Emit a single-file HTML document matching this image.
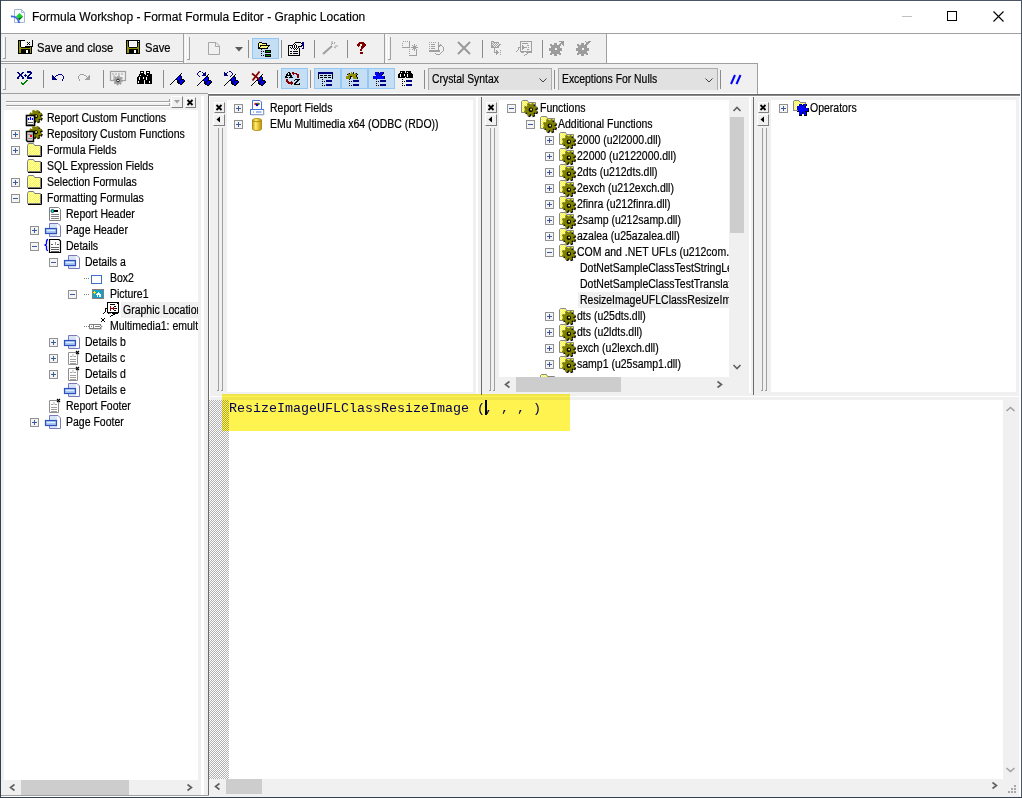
<!DOCTYPE html>
<html><head><meta charset="utf-8">
<style>
*{margin:0;padding:0;box-sizing:border-box}
html,body{width:1022px;height:798px;overflow:hidden;background:#fff;font-family:"Liberation Sans",sans-serif;color:#000;position:relative}
.a{position:absolute}
.t{position:absolute;white-space:nowrap;font-size:11px;line-height:14px}
.tr{position:absolute;white-space:nowrap;font-size:12px;line-height:14px;transform:scaleX(0.875);transform-origin:0 0;-webkit-text-stroke:0.2px #000}
svg{position:absolute;overflow:visible}
</style></head><body>
<div class="a" style="left:0px;top:0px;width:1022px;height:1px;background:#4a5666;"></div>
<div class="a" style="left:0px;top:0px;width:1px;height:798px;background:#34404e;"></div>
<div class="a" style="left:1021px;top:0px;width:1px;height:798px;background:#4a5666;"></div>
<div class="a" style="left:0px;top:797px;width:1022px;height:1px;background:#34404e;"></div>
<svg style="left:10px;top:8px;" width="16" height="16" viewBox="0 0 16 16"><path d="M4.5 1.5H11.5L14.5 4.5V14.5H4.5Z" fill="#fafcff" stroke="#a4b8d4"/><path d="M11.5 1.5V4.5H14.5" fill="none" stroke="#a4b8d4"/><path d="M9.5 5L13 8.5L9.5 12L6 8.5Z" fill="#20d030"/><path d="M13 8.5L9.5 12L8 10.5Z" fill="#006000"/><path d="M1 8.5Q5 8 7.5 11Q9 13 9 15" stroke="#3a68e0" stroke-width="1.8" fill="none"/></svg>
<div class="t" style="left:32px;top:10px;font-size:12px;letter-spacing:0px;color:#000;line-height:15px;-webkit-text-stroke:0.15px #000">Formula Workshop - Format Formula Editor - Graphic Location</div>
<div class="a" style="left:1px;top:33px;width:1020px;height:1px;background:#a0a0a0;"></div>
<div class="a" style="left:902px;top:16px;width:10px;height:1px;background:#c0c0c0;"></div>
<div class="a" style="left:947px;top:11px;width:10px;height:10px;border:1px solid #000"></div>
<svg style="left:993px;top:11px;" width="11" height="11" viewBox="0 0 11 11"><path d="M0.5 0.5L10.5 10.5M10.5 0.5L0.5 10.5" stroke="#000" stroke-width="1.1"/></svg>
<div class="a" style="left:1px;top:34px;width:182px;height:27px;background:#f0f0f0;"></div>
<div class="a" style="left:1px;top:61px;width:182px;height:1px;background:#a0a0a0;"></div>
<div class="a" style="left:183px;top:34px;width:1px;height:30px;background:#a0a0a0;"></div>
<div class="a" style="left:1px;top:63px;width:757px;height:1px;background:#a0a0a0;"></div>
<div class="a" style="left:3px;top:37px;width:1px;height:21px;background:#fff;"></div>
<div class="a" style="left:5px;top:37px;width:1px;height:22px;background:#a0a0a0;"></div>
<div class="a" style="left:3px;top:58px;width:3px;height:1px;background:#a0a0a0;"></div>
<div class="a" style="left:184px;top:34px;width:200px;height:29px;background:#f0f0f0;"></div>
<div class="a" style="left:185px;top:34px;width:1px;height:29px;background:#fff;"></div>
<div class="a" style="left:384px;top:34px;width:1px;height:30px;background:#a0a0a0;"></div>
<div class="a" style="left:187px;top:37px;width:1px;height:22px;background:#fff;"></div>
<div class="a" style="left:189px;top:37px;width:1px;height:23px;background:#a0a0a0;"></div>
<div class="a" style="left:187px;top:59px;width:3px;height:1px;background:#a0a0a0;"></div>
<div class="a" style="left:385px;top:34px;width:221px;height:29px;background:#f0f0f0;"></div>
<div class="a" style="left:386px;top:34px;width:1px;height:29px;background:#fff;"></div>
<div class="a" style="left:606px;top:34px;width:1px;height:30px;background:#a0a0a0;"></div>
<div class="a" style="left:388px;top:37px;width:1px;height:22px;background:#fff;"></div>
<div class="a" style="left:390px;top:37px;width:1px;height:23px;background:#a0a0a0;"></div>
<div class="a" style="left:388px;top:59px;width:3px;height:1px;background:#a0a0a0;"></div>
<svg style="left:16px;top:38px" width="17" height="16" shape-rendering="crispEdges"><rect x="2" y="2" width="7" height="1" fill="#000"/><rect x="16" y="2" width="1" height="1" fill="#000"/><rect x="2" y="3" width="1" height="1" fill="#000"/><rect x="3" y="3" width="1" height="1" fill="#909000"/><rect x="4" y="3" width="1" height="1" fill="#000"/><rect x="5" y="3" width="4" height="1" fill="#fff"/><rect x="16" y="3" width="1" height="1" fill="#000"/><rect x="2" y="4" width="1" height="1" fill="#000"/><rect x="3" y="4" width="1" height="1" fill="#909000"/><rect x="4" y="4" width="1" height="1" fill="#000"/><rect x="5" y="4" width="4" height="1" fill="#fff"/><rect x="11" y="4" width="1" height="1" fill="#000"/><rect x="13" y="4" width="1" height="1" fill="#000"/><rect x="16" y="4" width="1" height="1" fill="#000"/><rect x="2" y="5" width="1" height="1" fill="#000"/><rect x="3" y="5" width="1" height="1" fill="#909000"/><rect x="4" y="5" width="1" height="1" fill="#000"/><rect x="5" y="5" width="4" height="1" fill="#fff"/><rect x="12" y="5" width="1" height="1" fill="#000"/><rect x="16" y="5" width="1" height="1" fill="#000"/><rect x="2" y="6" width="1" height="1" fill="#000"/><rect x="3" y="6" width="1" height="1" fill="#909000"/><rect x="4" y="6" width="1" height="1" fill="#000"/><rect x="5" y="6" width="4" height="1" fill="#fff"/><rect x="11" y="6" width="1" height="1" fill="#000"/><rect x="13" y="6" width="1" height="1" fill="#000"/><rect x="16" y="6" width="1" height="1" fill="#000"/><rect x="2" y="7" width="1" height="1" fill="#000"/><rect x="3" y="7" width="1" height="1" fill="#909000"/><rect x="4" y="7" width="1" height="1" fill="#000"/><rect x="5" y="7" width="4" height="1" fill="#fff"/><rect x="16" y="7" width="1" height="1" fill="#000"/><rect x="2" y="8" width="1" height="1" fill="#000"/><rect x="3" y="8" width="1" height="1" fill="#909000"/><rect x="4" y="8" width="1" height="1" fill="#000"/><rect x="5" y="8" width="4" height="1" fill="#fff"/><rect x="9" y="8" width="8" height="1" fill="#000"/><rect x="2" y="9" width="1" height="1" fill="#000"/><rect x="3" y="9" width="2" height="1" fill="#909000"/><rect x="5" y="9" width="9" height="1" fill="#000"/><rect x="14" y="9" width="1" height="1" fill="#909000"/><rect x="15" y="9" width="1" height="1" fill="#000"/><rect x="2" y="10" width="1" height="1" fill="#000"/><rect x="3" y="10" width="12" height="1" fill="#909000"/><rect x="15" y="10" width="1" height="1" fill="#000"/><rect x="2" y="11" width="1" height="1" fill="#000"/><rect x="3" y="11" width="2" height="1" fill="#909000"/><rect x="5" y="11" width="9" height="1" fill="#000"/><rect x="14" y="11" width="1" height="1" fill="#909000"/><rect x="15" y="11" width="1" height="1" fill="#000"/><rect x="2" y="12" width="1" height="1" fill="#000"/><rect x="3" y="12" width="2" height="1" fill="#909000"/><rect x="5" y="12" width="5" height="1" fill="#000"/><rect x="10" y="12" width="2" height="1" fill="#fff"/><rect x="12" y="12" width="2" height="1" fill="#000"/><rect x="14" y="12" width="1" height="1" fill="#909000"/><rect x="15" y="12" width="1" height="1" fill="#000"/><rect x="2" y="13" width="1" height="1" fill="#000"/><rect x="3" y="13" width="2" height="1" fill="#909000"/><rect x="5" y="13" width="5" height="1" fill="#000"/><rect x="10" y="13" width="2" height="1" fill="#fff"/><rect x="12" y="13" width="2" height="1" fill="#000"/><rect x="14" y="13" width="1" height="1" fill="#909000"/><rect x="15" y="13" width="1" height="1" fill="#000"/><rect x="2" y="14" width="1" height="1" fill="#000"/><rect x="3" y="14" width="2" height="1" fill="#909000"/><rect x="5" y="14" width="5" height="1" fill="#000"/><rect x="10" y="14" width="2" height="1" fill="#fff"/><rect x="12" y="14" width="2" height="1" fill="#000"/><rect x="14" y="14" width="1" height="1" fill="#909000"/><rect x="15" y="14" width="1" height="1" fill="#000"/><rect x="2" y="15" width="14" height="1" fill="#000"/></svg>
<div class="tr" style="left:37px;top:41px;transform:scaleX(0.93)">Save and close</div>
<svg style="left:124px;top:38px" width="16" height="16" shape-rendering="crispEdges"><rect x="2" y="2" width="14" height="1" fill="#000"/><rect x="2" y="3" width="1" height="1" fill="#000"/><rect x="3" y="3" width="1" height="1" fill="#909000"/><rect x="4" y="3" width="1" height="1" fill="#000"/><rect x="5" y="3" width="8" height="1" fill="#fff"/><rect x="13" y="3" width="1" height="1" fill="#000"/><rect x="14" y="3" width="1" height="1" fill="#fff"/><rect x="15" y="3" width="1" height="1" fill="#000"/><rect x="2" y="4" width="1" height="1" fill="#000"/><rect x="3" y="4" width="1" height="1" fill="#909000"/><rect x="4" y="4" width="1" height="1" fill="#000"/><rect x="5" y="4" width="1" height="1" fill="#fff"/><rect x="6" y="4" width="6" height="1" fill="#f0f0f0"/><rect x="12" y="4" width="1" height="1" fill="#fff"/><rect x="13" y="4" width="3" height="1" fill="#000"/><rect x="2" y="5" width="1" height="1" fill="#000"/><rect x="3" y="5" width="1" height="1" fill="#909000"/><rect x="4" y="5" width="1" height="1" fill="#000"/><rect x="5" y="5" width="1" height="1" fill="#fff"/><rect x="6" y="5" width="6" height="1" fill="#f0f0f0"/><rect x="12" y="5" width="1" height="1" fill="#fff"/><rect x="13" y="5" width="1" height="1" fill="#000"/><rect x="14" y="5" width="1" height="1" fill="#909000"/><rect x="15" y="5" width="1" height="1" fill="#000"/><rect x="2" y="6" width="1" height="1" fill="#000"/><rect x="3" y="6" width="1" height="1" fill="#909000"/><rect x="4" y="6" width="1" height="1" fill="#000"/><rect x="5" y="6" width="1" height="1" fill="#fff"/><rect x="6" y="6" width="6" height="1" fill="#f0f0f0"/><rect x="12" y="6" width="1" height="1" fill="#fff"/><rect x="13" y="6" width="1" height="1" fill="#000"/><rect x="14" y="6" width="1" height="1" fill="#909000"/><rect x="15" y="6" width="1" height="1" fill="#000"/><rect x="2" y="7" width="1" height="1" fill="#000"/><rect x="3" y="7" width="1" height="1" fill="#909000"/><rect x="4" y="7" width="1" height="1" fill="#000"/><rect x="5" y="7" width="1" height="1" fill="#fff"/><rect x="6" y="7" width="6" height="1" fill="#f0f0f0"/><rect x="12" y="7" width="1" height="1" fill="#fff"/><rect x="13" y="7" width="1" height="1" fill="#000"/><rect x="14" y="7" width="1" height="1" fill="#909000"/><rect x="15" y="7" width="1" height="1" fill="#000"/><rect x="2" y="8" width="1" height="1" fill="#000"/><rect x="3" y="8" width="1" height="1" fill="#909000"/><rect x="4" y="8" width="1" height="1" fill="#000"/><rect x="5" y="8" width="8" height="1" fill="#fff"/><rect x="13" y="8" width="1" height="1" fill="#000"/><rect x="14" y="8" width="1" height="1" fill="#909000"/><rect x="15" y="8" width="1" height="1" fill="#000"/><rect x="2" y="9" width="1" height="1" fill="#000"/><rect x="3" y="9" width="2" height="1" fill="#909000"/><rect x="5" y="9" width="8" height="1" fill="#000"/><rect x="13" y="9" width="2" height="1" fill="#909000"/><rect x="15" y="9" width="1" height="1" fill="#000"/><rect x="2" y="10" width="1" height="1" fill="#000"/><rect x="3" y="10" width="12" height="1" fill="#909000"/><rect x="15" y="10" width="1" height="1" fill="#000"/><rect x="2" y="11" width="1" height="1" fill="#000"/><rect x="3" y="11" width="2" height="1" fill="#909000"/><rect x="5" y="11" width="9" height="1" fill="#000"/><rect x="14" y="11" width="1" height="1" fill="#909000"/><rect x="15" y="11" width="1" height="1" fill="#000"/><rect x="2" y="12" width="1" height="1" fill="#000"/><rect x="3" y="12" width="2" height="1" fill="#909000"/><rect x="5" y="12" width="5" height="1" fill="#000"/><rect x="10" y="12" width="2" height="1" fill="#fff"/><rect x="12" y="12" width="2" height="1" fill="#000"/><rect x="14" y="12" width="1" height="1" fill="#909000"/><rect x="15" y="12" width="1" height="1" fill="#000"/><rect x="2" y="13" width="1" height="1" fill="#000"/><rect x="3" y="13" width="2" height="1" fill="#909000"/><rect x="5" y="13" width="5" height="1" fill="#000"/><rect x="10" y="13" width="2" height="1" fill="#fff"/><rect x="12" y="13" width="2" height="1" fill="#000"/><rect x="14" y="13" width="1" height="1" fill="#909000"/><rect x="15" y="13" width="1" height="1" fill="#000"/><rect x="2" y="14" width="1" height="1" fill="#000"/><rect x="3" y="14" width="2" height="1" fill="#909000"/><rect x="5" y="14" width="5" height="1" fill="#000"/><rect x="10" y="14" width="2" height="1" fill="#fff"/><rect x="12" y="14" width="2" height="1" fill="#000"/><rect x="14" y="14" width="1" height="1" fill="#909000"/><rect x="15" y="14" width="1" height="1" fill="#000"/><rect x="2" y="15" width="14" height="1" fill="#000"/></svg>
<div class="tr" style="left:145px;top:41px;transform:scaleX(0.93)">Save</div>
<svg style="left:208px;top:42px;" width="12" height="13" viewBox="0 0 12 13"><path d="M0.5 0.5H8L11.5 4V12.5H0.5Z" fill="none" stroke="#a6a6a6"/><path d="M7.5 0.5V4.5H11.5" fill="none" stroke="#a6a6a6"/></svg>
<svg style="left:235px;top:47px;" width="8" height="5" viewBox="0 0 8 5"><path d="M0 0H8L4 4.5Z" fill="#5a5a5a"/></svg>
<div class="a" style="left:248px;top:40px;width:1px;height:18px;background:#8c8c8c;"></div>
<div class="a" style="left:252px;top:38px;width:27px;height:21px;background:#c6def3;border:1px solid #92c8f6"></div>
<svg style="left:256px;top:40px" width="19" height="17" shape-rendering="crispEdges"><rect x="3" y="2" width="3" height="1" fill="#000"/><rect x="2" y="3" width="1" height="1" fill="#000"/><rect x="3" y="3" width="1" height="1" fill="#ffff00"/><rect x="4" y="3" width="1" height="1" fill="#fff"/><rect x="5" y="3" width="1" height="1" fill="#ffff00"/><rect x="6" y="3" width="5" height="1" fill="#000"/><rect x="2" y="4" width="1" height="1" fill="#000"/><rect x="3" y="4" width="1" height="1" fill="#fff"/><rect x="4" y="4" width="1" height="1" fill="#ffff00"/><rect x="5" y="4" width="1" height="1" fill="#fff"/><rect x="6" y="4" width="1" height="1" fill="#ffff00"/><rect x="7" y="4" width="1" height="1" fill="#fff"/><rect x="8" y="4" width="1" height="1" fill="#ffff00"/><rect x="9" y="4" width="1" height="1" fill="#fff"/><rect x="10" y="4" width="1" height="1" fill="#000"/><rect x="2" y="5" width="1" height="1" fill="#000"/><rect x="3" y="5" width="1" height="1" fill="#ffff00"/><rect x="4" y="5" width="10" height="1" fill="#000"/><rect x="2" y="6" width="1" height="1" fill="#000"/><rect x="3" y="6" width="1" height="1" fill="#fff"/><rect x="4" y="6" width="1" height="1" fill="#000"/><rect x="5" y="6" width="1" height="1" fill="#ffff00"/><rect x="6" y="6" width="1" height="1" fill="#fff"/><rect x="7" y="6" width="1" height="1" fill="#ffff00"/><rect x="8" y="6" width="1" height="1" fill="#fff"/><rect x="9" y="6" width="1" height="1" fill="#ffff00"/><rect x="10" y="6" width="1" height="1" fill="#fff"/><rect x="11" y="6" width="1" height="1" fill="#ffff00"/><rect x="12" y="6" width="1" height="1" fill="#000"/><rect x="2" y="7" width="2" height="1" fill="#000"/><rect x="4" y="7" width="1" height="1" fill="#ffff00"/><rect x="5" y="7" width="1" height="1" fill="#fff"/><rect x="6" y="7" width="1" height="1" fill="#ffff00"/><rect x="7" y="7" width="1" height="1" fill="#fff"/><rect x="8" y="7" width="1" height="1" fill="#ffff00"/><rect x="9" y="7" width="1" height="1" fill="#fff"/><rect x="10" y="7" width="1" height="1" fill="#ffff00"/><rect x="11" y="7" width="1" height="1" fill="#000"/><rect x="2" y="8" width="10" height="1" fill="#000"/><rect x="5" y="9" width="1" height="1" fill="#000"/><rect x="9" y="10" width="6" height="1" fill="#000"/><rect x="5" y="11" width="1" height="1" fill="#000"/><rect x="7" y="11" width="1" height="1" fill="#000"/><rect x="9" y="11" width="1" height="1" fill="#000"/><rect x="10" y="11" width="4" height="1" fill="#008000"/><rect x="14" y="11" width="1" height="1" fill="#000"/><rect x="9" y="12" width="6" height="1" fill="#000"/><rect x="5" y="13" width="1" height="1" fill="#000"/><rect x="9" y="14" width="6" height="1" fill="#000"/><rect x="5" y="15" width="1" height="1" fill="#000"/><rect x="7" y="15" width="1" height="1" fill="#000"/><rect x="9" y="15" width="1" height="1" fill="#000"/><rect x="10" y="15" width="4" height="1" fill="#008000"/><rect x="14" y="15" width="1" height="1" fill="#000"/><rect x="9" y="16" width="6" height="1" fill="#000"/></svg>
<div class="a" style="left:281px;top:40px;width:1px;height:18px;background:#8c8c8c;"></div>
<svg style="left:286px;top:40px" width="18" height="16" shape-rendering="crispEdges"><rect x="9" y="2" width="6" height="1" fill="#000"/><rect x="16" y="2" width="2" height="1" fill="#000080"/><rect x="8" y="3" width="1" height="1" fill="#000"/><rect x="9" y="3" width="1" height="1" fill="#fff"/><rect x="15" y="3" width="1" height="1" fill="#000"/><rect x="16" y="3" width="2" height="1" fill="#000080"/><rect x="7" y="4" width="1" height="1" fill="#000"/><rect x="8" y="4" width="1" height="1" fill="#fff"/><rect x="9" y="4" width="1" height="1" fill="#000"/><rect x="16" y="4" width="2" height="1" fill="#000080"/><rect x="2" y="5" width="5" height="1" fill="#000"/><rect x="7" y="5" width="1" height="1" fill="#fff"/><rect x="8" y="5" width="1" height="1" fill="#000"/><rect x="9" y="5" width="1" height="1" fill="#fff"/><rect x="10" y="5" width="1" height="1" fill="#000"/><rect x="15" y="5" width="1" height="1" fill="#000"/><rect x="16" y="5" width="2" height="1" fill="#000080"/><rect x="2" y="6" width="1" height="1" fill="#000"/><rect x="6" y="6" width="1" height="1" fill="#000"/><rect x="7" y="6" width="1" height="1" fill="#fff"/><rect x="8" y="6" width="1" height="1" fill="#000"/><rect x="9" y="6" width="1" height="1" fill="#fff"/><rect x="10" y="6" width="1" height="1" fill="#000"/><rect x="11" y="6" width="1" height="1" fill="#fff"/><rect x="12" y="6" width="4" height="1" fill="#000"/><rect x="17" y="6" width="1" height="1" fill="#000080"/><rect x="2" y="7" width="1" height="1" fill="#000"/><rect x="4" y="7" width="1" height="1" fill="#000"/><rect x="5" y="7" width="1" height="1" fill="#fff"/><rect x="6" y="7" width="1" height="1" fill="#000"/><rect x="7" y="7" width="1" height="1" fill="#fff"/><rect x="8" y="7" width="1" height="1" fill="#000"/><rect x="9" y="7" width="1" height="1" fill="#fff"/><rect x="10" y="7" width="1" height="1" fill="#000"/><rect x="11" y="7" width="1" height="1" fill="#fff"/><rect x="12" y="7" width="1" height="1" fill="#000"/><rect x="17" y="7" width="1" height="1" fill="#000080"/><rect x="2" y="8" width="1" height="1" fill="#000"/><rect x="5" y="8" width="1" height="1" fill="#000"/><rect x="7" y="8" width="1" height="1" fill="#000"/><rect x="8" y="8" width="1" height="1" fill="#fff"/><rect x="9" y="8" width="1" height="1" fill="#000"/><rect x="10" y="8" width="1" height="1" fill="#fff"/><rect x="11" y="8" width="1" height="1" fill="#000"/><rect x="13" y="8" width="1" height="1" fill="#000"/><rect x="16" y="8" width="2" height="1" fill="#000080"/><rect x="2" y="9" width="1" height="1" fill="#000"/><rect x="8" y="9" width="1" height="1" fill="#000"/><rect x="9" y="9" width="1" height="1" fill="#fff"/><rect x="10" y="9" width="1" height="1" fill="#000"/><rect x="13" y="9" width="1" height="1" fill="#000"/><rect x="2" y="10" width="1" height="1" fill="#000"/><rect x="13" y="10" width="1" height="1" fill="#000"/><rect x="2" y="11" width="1" height="1" fill="#000"/><rect x="4" y="11" width="2" height="1" fill="#000"/><rect x="7" y="11" width="5" height="1" fill="#000"/><rect x="13" y="11" width="1" height="1" fill="#000"/><rect x="2" y="12" width="1" height="1" fill="#000"/><rect x="13" y="12" width="1" height="1" fill="#000"/><rect x="2" y="13" width="1" height="1" fill="#000"/><rect x="4" y="13" width="2" height="1" fill="#000"/><rect x="7" y="13" width="5" height="1" fill="#000"/><rect x="13" y="13" width="1" height="1" fill="#000"/><rect x="2" y="14" width="1" height="1" fill="#000"/><rect x="13" y="14" width="1" height="1" fill="#000"/><rect x="2" y="15" width="12" height="1" fill="#000"/></svg>
<div class="a" style="left:314px;top:40px;width:1px;height:18px;background:#8c8c8c;"></div>
<svg style="left:322px;top:41px;" width="16" height="14" viewBox="0 0 16 14"><path d="M1 13L10 5" stroke="#a0a0a0" stroke-width="2.2"/><path d="M10 0V3M13 5H16M11 2L9 4M13 1L12 3M14 7L12 6" stroke="#a0a0a0" stroke-width="1"/></svg>
<div class="a" style="left:347px;top:40px;width:1px;height:18px;background:#8c8c8c;"></div>
<svg style="left:352px;top:40px" width="14" height="14" shape-rendering="crispEdges"><rect x="7" y="2" width="5" height="1" fill="#800000"/><rect x="6" y="3" width="7" height="1" fill="#800000"/><rect x="5" y="4" width="3" height="1" fill="#800000"/><rect x="10" y="4" width="4" height="1" fill="#800000"/><rect x="5" y="5" width="3" height="1" fill="#800000"/><rect x="10" y="5" width="4" height="1" fill="#800000"/><rect x="6" y="6" width="1" height="1" fill="#800000"/><rect x="9" y="6" width="4" height="1" fill="#800000"/><rect x="9" y="7" width="3" height="1" fill="#800000"/><rect x="9" y="8" width="2" height="1" fill="#800000"/><rect x="8" y="9" width="2" height="1" fill="#800000"/><rect x="8" y="10" width="2" height="1" fill="#800000"/><rect x="8" y="12" width="3" height="1" fill="#800000"/><rect x="8" y="13" width="3" height="1" fill="#800000"/></svg>
<svg style="left:400px;top:39px" width="18" height="17" shape-rendering="crispEdges"><rect x="3" y="2" width="1" height="1" fill="#a0a0a0"/><rect x="5" y="2" width="1" height="1" fill="#a0a0a0"/><rect x="7" y="2" width="1" height="1" fill="#a0a0a0"/><rect x="9" y="2" width="1" height="1" fill="#a0a0a0"/><rect x="9" y="3" width="1" height="1" fill="#a0a0a0"/><rect x="2" y="4" width="1" height="1" fill="#a0a0a0"/><rect x="9" y="4" width="1" height="1" fill="#a0a0a0"/><rect x="9" y="5" width="1" height="1" fill="#a0a0a0"/><rect x="14" y="5" width="1" height="1" fill="#a0a0a0"/><rect x="2" y="6" width="1" height="1" fill="#a0a0a0"/><rect x="9" y="6" width="1" height="1" fill="#a0a0a0"/><rect x="12" y="6" width="1" height="1" fill="#a0a0a0"/><rect x="14" y="6" width="1" height="1" fill="#a0a0a0"/><rect x="16" y="6" width="1" height="1" fill="#a0a0a0"/><rect x="9" y="7" width="1" height="1" fill="#a0a0a0"/><rect x="13" y="7" width="3" height="1" fill="#a0a0a0"/><rect x="2" y="8" width="8" height="1" fill="#a0a0a0"/><rect x="11" y="8" width="7" height="1" fill="#a0a0a0"/><rect x="13" y="9" width="3" height="1" fill="#a0a0a0"/><rect x="9" y="10" width="1" height="1" fill="#a0a0a0"/><rect x="12" y="10" width="1" height="1" fill="#a0a0a0"/><rect x="14" y="10" width="1" height="1" fill="#a0a0a0"/><rect x="16" y="10" width="1" height="1" fill="#a0a0a0"/><rect x="14" y="11" width="1" height="1" fill="#a0a0a0"/><rect x="16" y="11" width="1" height="1" fill="#a0a0a0"/><rect x="9" y="12" width="1" height="1" fill="#a0a0a0"/><rect x="16" y="12" width="1" height="1" fill="#a0a0a0"/><rect x="16" y="13" width="1" height="1" fill="#a0a0a0"/><rect x="9" y="14" width="1" height="1" fill="#a0a0a0"/><rect x="16" y="14" width="1" height="1" fill="#a0a0a0"/><rect x="16" y="15" width="1" height="1" fill="#a0a0a0"/><rect x="9" y="16" width="8" height="1" fill="#a0a0a0"/></svg>
<svg style="left:428px;top:39px" width="18" height="16" shape-rendering="crispEdges"><rect x="1" y="3" width="1" height="1" fill="#a0a0a0"/><rect x="3" y="3" width="1" height="1" fill="#a0a0a0"/><rect x="5" y="3" width="1" height="1" fill="#a0a0a0"/><rect x="7" y="3" width="1" height="1" fill="#a0a0a0"/><rect x="10" y="3" width="1" height="1" fill="#a0a0a0"/><rect x="10" y="4" width="1" height="1" fill="#a0a0a0"/><rect x="1" y="5" width="1" height="1" fill="#a0a0a0"/><rect x="3" y="5" width="4" height="1" fill="#a0a0a0"/><rect x="10" y="5" width="1" height="1" fill="#a0a0a0"/><rect x="12" y="5" width="1" height="1" fill="#a0a0a0"/><rect x="10" y="6" width="4" height="1" fill="#a0a0a0"/><rect x="1" y="7" width="1" height="1" fill="#a0a0a0"/><rect x="3" y="7" width="4" height="1" fill="#a0a0a0"/><rect x="10" y="7" width="2" height="1" fill="#a0a0a0"/><rect x="14" y="7" width="1" height="1" fill="#a0a0a0"/><rect x="10" y="8" width="1" height="1" fill="#a0a0a0"/><rect x="15" y="8" width="1" height="1" fill="#a0a0a0"/><rect x="1" y="9" width="1" height="1" fill="#a0a0a0"/><rect x="3" y="9" width="4" height="1" fill="#a0a0a0"/><rect x="10" y="9" width="1" height="1" fill="#a0a0a0"/><rect x="15" y="9" width="1" height="1" fill="#a0a0a0"/><rect x="10" y="10" width="1" height="1" fill="#a0a0a0"/><rect x="15" y="10" width="1" height="1" fill="#a0a0a0"/><rect x="1" y="11" width="11" height="1" fill="#a0a0a0"/><rect x="15" y="11" width="1" height="1" fill="#a0a0a0"/><rect x="1" y="12" width="11" height="1" fill="#a0a0a0"/><rect x="14" y="12" width="1" height="1" fill="#a0a0a0"/><rect x="13" y="13" width="1" height="1" fill="#a0a0a0"/><rect x="7" y="14" width="1" height="1" fill="#a0a0a0"/><rect x="12" y="14" width="1" height="1" fill="#a0a0a0"/><rect x="8" y="15" width="4" height="1" fill="#a0a0a0"/></svg>
<svg style="left:457px;top:41px;" width="14" height="14" viewBox="0 0 14 14"><path d="M1 1L13 13M13 1L1 13" stroke="#9a9a9a" stroke-width="2"/></svg>
<div class="a" style="left:482px;top:40px;width:1px;height:18px;background:#8c8c8c;"></div>
<svg style="left:488px;top:39px" width="14" height="16" shape-rendering="crispEdges"><rect x="3" y="2" width="3" height="1" fill="#a0a0a0"/><rect x="3" y="3" width="1" height="1" fill="#a0a0a0"/><rect x="4" y="3" width="1" height="1" fill="#f0f0f0"/><rect x="5" y="3" width="6" height="1" fill="#a0a0a0"/><rect x="3" y="4" width="2" height="1" fill="#a0a0a0"/><rect x="5" y="4" width="1" height="1" fill="#f0f0f0"/><rect x="6" y="4" width="1" height="1" fill="#a0a0a0"/><rect x="7" y="4" width="1" height="1" fill="#f0f0f0"/><rect x="8" y="4" width="1" height="1" fill="#a0a0a0"/><rect x="9" y="4" width="1" height="1" fill="#f0f0f0"/><rect x="10" y="4" width="1" height="1" fill="#a0a0a0"/><rect x="3" y="5" width="1" height="1" fill="#a0a0a0"/><rect x="4" y="5" width="1" height="1" fill="#f0f0f0"/><rect x="5" y="5" width="1" height="1" fill="#a0a0a0"/><rect x="6" y="5" width="1" height="1" fill="#f0f0f0"/><rect x="7" y="5" width="1" height="1" fill="#a0a0a0"/><rect x="8" y="5" width="1" height="1" fill="#f0f0f0"/><rect x="9" y="5" width="1" height="1" fill="#a0a0a0"/><rect x="10" y="5" width="1" height="1" fill="#f0f0f0"/><rect x="11" y="5" width="2" height="1" fill="#a0a0a0"/><rect x="3" y="6" width="2" height="1" fill="#a0a0a0"/><rect x="5" y="6" width="1" height="1" fill="#f0f0f0"/><rect x="6" y="6" width="1" height="1" fill="#a0a0a0"/><rect x="7" y="6" width="1" height="1" fill="#f0f0f0"/><rect x="8" y="6" width="1" height="1" fill="#a0a0a0"/><rect x="9" y="6" width="1" height="1" fill="#f0f0f0"/><rect x="10" y="6" width="2" height="1" fill="#a0a0a0"/><rect x="3" y="7" width="3" height="1" fill="#a0a0a0"/><rect x="6" y="7" width="1" height="1" fill="#f0f0f0"/><rect x="7" y="7" width="1" height="1" fill="#a0a0a0"/><rect x="8" y="7" width="1" height="1" fill="#f0f0f0"/><rect x="9" y="7" width="2" height="1" fill="#a0a0a0"/><rect x="3" y="8" width="8" height="1" fill="#a0a0a0"/><rect x="6" y="9" width="1" height="1" fill="#a0a0a0"/><rect x="6" y="10" width="1" height="1" fill="#a0a0a0"/><rect x="6" y="11" width="1" height="1" fill="#a0a0a0"/><rect x="8" y="11" width="1" height="1" fill="#a0a0a0"/><rect x="12" y="11" width="1" height="1" fill="#a0a0a0"/><rect x="6" y="12" width="1" height="1" fill="#a0a0a0"/><rect x="8" y="12" width="2" height="1" fill="#a0a0a0"/><rect x="6" y="13" width="5" height="1" fill="#a0a0a0"/><rect x="12" y="13" width="1" height="1" fill="#a0a0a0"/><rect x="8" y="14" width="2" height="1" fill="#a0a0a0"/><rect x="8" y="15" width="1" height="1" fill="#a0a0a0"/><rect x="12" y="15" width="1" height="1" fill="#a0a0a0"/></svg>
<svg style="left:516px;top:39px" width="16" height="17" shape-rendering="crispEdges"><rect x="4" y="2" width="12" height="1" fill="#a0a0a0"/><rect x="4" y="3" width="1" height="1" fill="#a0a0a0"/><rect x="14" y="3" width="1" height="1" fill="#f0f0f0"/><rect x="15" y="3" width="1" height="1" fill="#a0a0a0"/><rect x="4" y="4" width="1" height="1" fill="#a0a0a0"/><rect x="6" y="4" width="6" height="1" fill="#a0a0a0"/><rect x="15" y="4" width="1" height="1" fill="#a0a0a0"/><rect x="4" y="5" width="1" height="1" fill="#a0a0a0"/><rect x="15" y="5" width="1" height="1" fill="#a0a0a0"/><rect x="4" y="6" width="1" height="1" fill="#a0a0a0"/><rect x="6" y="6" width="1" height="1" fill="#a0a0a0"/><rect x="11" y="6" width="2" height="1" fill="#a0a0a0"/><rect x="15" y="6" width="1" height="1" fill="#a0a0a0"/><rect x="4" y="7" width="1" height="1" fill="#a0a0a0"/><rect x="6" y="7" width="2" height="1" fill="#a0a0a0"/><rect x="15" y="7" width="1" height="1" fill="#a0a0a0"/><rect x="2" y="8" width="3" height="1" fill="#a0a0a0"/><rect x="6" y="8" width="5" height="1" fill="#a0a0a0"/><rect x="12" y="8" width="1" height="1" fill="#a0a0a0"/><rect x="15" y="8" width="1" height="1" fill="#a0a0a0"/><rect x="2" y="9" width="1" height="1" fill="#a0a0a0"/><rect x="4" y="9" width="1" height="1" fill="#a0a0a0"/><rect x="6" y="9" width="2" height="1" fill="#a0a0a0"/><rect x="15" y="9" width="1" height="1" fill="#a0a0a0"/><rect x="2" y="10" width="1" height="1" fill="#a0a0a0"/><rect x="4" y="10" width="1" height="1" fill="#a0a0a0"/><rect x="6" y="10" width="1" height="1" fill="#a0a0a0"/><rect x="11" y="10" width="2" height="1" fill="#a0a0a0"/><rect x="15" y="10" width="1" height="1" fill="#a0a0a0"/><rect x="1" y="11" width="1" height="1" fill="#a0a0a0"/><rect x="4" y="11" width="1" height="1" fill="#a0a0a0"/><rect x="15" y="11" width="1" height="1" fill="#a0a0a0"/><rect x="0" y="12" width="1" height="1" fill="#a0a0a0"/><rect x="4" y="12" width="12" height="1" fill="#a0a0a0"/><rect x="5" y="13" width="3" height="1" fill="#a0a0a0"/><rect x="10" y="13" width="6" height="1" fill="#a0a0a0"/><rect x="11" y="14" width="1" height="1" fill="#a0a0a0"/><rect x="9" y="15" width="2" height="1" fill="#a0a0a0"/><rect x="8" y="16" width="1" height="1" fill="#a0a0a0"/></svg>
<div class="a" style="left:542px;top:40px;width:1px;height:18px;background:#8c8c8c;"></div>
<svg style="left:549px;top:41px" width="15" height="15" shape-rendering="crispEdges"><rect x="10" y="0" width="5" height="1" fill="#9c9c9c"/><rect x="12" y="1" width="3" height="1" fill="#9c9c9c"/><rect x="5" y="2" width="3" height="1" fill="#9c9c9c"/><rect x="11" y="2" width="4" height="1" fill="#9c9c9c"/><rect x="1" y="3" width="2" height="1" fill="#9c9c9c"/><rect x="5" y="3" width="3" height="1" fill="#9c9c9c"/><rect x="10" y="3" width="2" height="1" fill="#9c9c9c"/><rect x="13" y="3" width="2" height="1" fill="#9c9c9c"/><rect x="1" y="4" width="11" height="1" fill="#9c9c9c"/><rect x="14" y="4" width="1" height="1" fill="#9c9c9c"/><rect x="2" y="5" width="9" height="1" fill="#9c9c9c"/><rect x="2" y="6" width="9" height="1" fill="#9c9c9c"/><rect x="0" y="7" width="6" height="1" fill="#9c9c9c"/><rect x="8" y="7" width="5" height="1" fill="#9c9c9c"/><rect x="0" y="8" width="6" height="1" fill="#9c9c9c"/><rect x="8" y="8" width="5" height="1" fill="#9c9c9c"/><rect x="0" y="9" width="13" height="1" fill="#9c9c9c"/><rect x="2" y="10" width="9" height="1" fill="#9c9c9c"/><rect x="2" y="11" width="9" height="1" fill="#9c9c9c"/><rect x="1" y="12" width="11" height="1" fill="#9c9c9c"/><rect x="1" y="13" width="2" height="1" fill="#9c9c9c"/><rect x="5" y="13" width="3" height="1" fill="#9c9c9c"/><rect x="10" y="13" width="2" height="1" fill="#9c9c9c"/><rect x="5" y="14" width="3" height="1" fill="#9c9c9c"/></svg>
<svg style="left:576px;top:41px" width="15" height="15" shape-rendering="crispEdges"><rect x="9" y="0" width="1" height="1" fill="#9c9c9c"/><rect x="12" y="0" width="3" height="1" fill="#9c9c9c"/><rect x="10" y="1" width="4" height="1" fill="#9c9c9c"/><rect x="5" y="2" width="3" height="1" fill="#9c9c9c"/><rect x="10" y="2" width="3" height="1" fill="#9c9c9c"/><rect x="1" y="3" width="2" height="1" fill="#9c9c9c"/><rect x="5" y="3" width="3" height="1" fill="#9c9c9c"/><rect x="9" y="3" width="3" height="1" fill="#9c9c9c"/><rect x="1" y="4" width="10" height="1" fill="#9c9c9c"/><rect x="2" y="5" width="9" height="1" fill="#9c9c9c"/><rect x="2" y="6" width="9" height="1" fill="#9c9c9c"/><rect x="0" y="7" width="6" height="1" fill="#9c9c9c"/><rect x="8" y="7" width="5" height="1" fill="#9c9c9c"/><rect x="0" y="8" width="6" height="1" fill="#9c9c9c"/><rect x="8" y="8" width="5" height="1" fill="#9c9c9c"/><rect x="0" y="9" width="13" height="1" fill="#9c9c9c"/><rect x="2" y="10" width="9" height="1" fill="#9c9c9c"/><rect x="2" y="11" width="9" height="1" fill="#9c9c9c"/><rect x="1" y="12" width="11" height="1" fill="#9c9c9c"/><rect x="1" y="13" width="2" height="1" fill="#9c9c9c"/><rect x="5" y="13" width="3" height="1" fill="#9c9c9c"/><rect x="10" y="13" width="2" height="1" fill="#9c9c9c"/><rect x="5" y="14" width="3" height="1" fill="#9c9c9c"/></svg>
<div class="a" style="left:1px;top:64px;width:757px;height:29px;background:#f0f0f0;"></div>
<div class="a" style="left:757px;top:64px;width:1px;height:30px;background:#a0a0a0;"></div>
<div class="a" style="left:3px;top:68px;width:1px;height:21px;background:#fff;"></div>
<div class="a" style="left:5px;top:68px;width:1px;height:22px;background:#a0a0a0;"></div>
<div class="a" style="left:3px;top:89px;width:3px;height:1px;background:#a0a0a0;"></div>
<svg style="left:15px;top:69px" width="17" height="16" shape-rendering="crispEdges"><rect x="12" y="2" width="4" height="1" fill="#000080"/><rect x="2" y="3" width="2" height="1" fill="#000080"/><rect x="7" y="3" width="2" height="1" fill="#000080"/><rect x="12" y="3" width="5" height="1" fill="#000080"/><rect x="3" y="4" width="2" height="1" fill="#000080"/><rect x="6" y="4" width="2" height="1" fill="#000080"/><rect x="15" y="4" width="2" height="1" fill="#000080"/><rect x="4" y="5" width="3" height="1" fill="#000080"/><rect x="10" y="5" width="1" height="1" fill="#000080"/><rect x="14" y="5" width="2" height="1" fill="#000080"/><rect x="4" y="6" width="3" height="1" fill="#000080"/><rect x="9" y="6" width="3" height="1" fill="#000080"/><rect x="13" y="6" width="2" height="1" fill="#000080"/><rect x="3" y="7" width="2" height="1" fill="#000080"/><rect x="6" y="7" width="2" height="1" fill="#000080"/><rect x="10" y="7" width="1" height="1" fill="#000080"/><rect x="12" y="7" width="2" height="1" fill="#000080"/><rect x="2" y="8" width="2" height="1" fill="#000080"/><rect x="7" y="8" width="2" height="1" fill="#000080"/><rect x="12" y="8" width="5" height="1" fill="#000080"/><rect x="2" y="9" width="2" height="1" fill="#000080"/><rect x="7" y="9" width="2" height="1" fill="#000080"/><rect x="12" y="9" width="5" height="1" fill="#000080"/><rect x="11" y="11" width="2" height="1" fill="#008000"/><rect x="10" y="12" width="2" height="1" fill="#008000"/><rect x="6" y="13" width="1" height="1" fill="#008000"/><rect x="9" y="13" width="2" height="1" fill="#008000"/><rect x="6" y="14" width="4" height="1" fill="#008000"/><rect x="7" y="15" width="2" height="1" fill="#008000"/></svg>
<div class="a" style="left:43px;top:70px;width:1px;height:18px;background:#8c8c8c;"></div>
<svg style="left:50px;top:71px" width="14" height="10" shape-rendering="crispEdges"><rect x="8" y="3" width="4" height="1" fill="#000080"/><rect x="2" y="4" width="1" height="1" fill="#000080"/><rect x="6" y="4" width="2" height="1" fill="#000080"/><rect x="12" y="4" width="1" height="1" fill="#000080"/><rect x="2" y="5" width="2" height="1" fill="#000080"/><rect x="5" y="5" width="1" height="1" fill="#000080"/><rect x="13" y="5" width="1" height="1" fill="#000080"/><rect x="2" y="6" width="3" height="1" fill="#000080"/><rect x="13" y="6" width="1" height="1" fill="#000080"/><rect x="2" y="7" width="4" height="1" fill="#000080"/><rect x="13" y="7" width="1" height="1" fill="#000080"/><rect x="2" y="8" width="5" height="1" fill="#000080"/><rect x="12" y="8" width="1" height="1" fill="#000080"/><rect x="12" y="9" width="1" height="1" fill="#000080"/></svg>
<svg style="left:78px;top:71px" width="14" height="10" shape-rendering="crispEdges"><rect x="2" y="3" width="4" height="1" fill="#a0a0a0"/><rect x="1" y="4" width="1" height="1" fill="#a0a0a0"/><rect x="6" y="4" width="2" height="1" fill="#a0a0a0"/><rect x="11" y="4" width="1" height="1" fill="#a0a0a0"/><rect x="0" y="5" width="1" height="1" fill="#a0a0a0"/><rect x="8" y="5" width="1" height="1" fill="#a0a0a0"/><rect x="10" y="5" width="2" height="1" fill="#a0a0a0"/><rect x="0" y="6" width="1" height="1" fill="#a0a0a0"/><rect x="9" y="6" width="3" height="1" fill="#a0a0a0"/><rect x="0" y="7" width="1" height="1" fill="#a0a0a0"/><rect x="8" y="7" width="4" height="1" fill="#a0a0a0"/><rect x="1" y="8" width="1" height="1" fill="#a0a0a0"/><rect x="7" y="8" width="5" height="1" fill="#a0a0a0"/><rect x="1" y="9" width="1" height="1" fill="#a0a0a0"/></svg>
<div class="a" style="left:103px;top:70px;width:1px;height:18px;background:#8c8c8c;"></div>
<svg style="left:110px;top:71px;" width="16" height="15" viewBox="0 0 16 15"><rect x="0.5" y="0.5" width="15" height="9" fill="none" stroke="#a0a0a0" stroke-width="1.2"/><path d="M2 3H14M3 5H6M8 5H11M3 7H6M8 7H13" stroke="#a0a0a0" stroke-dasharray="2 1"/><polygon points="12.50,9.50 12.41,10.38 10.99,10.74 10.69,11.30 11.18,12.68 10.50,13.24 9.24,12.49 8.63,12.68 8.00,14.00 7.12,13.91 6.76,12.49 6.20,12.19 4.82,12.68 4.26,12.00 5.01,10.74 4.82,10.13 3.50,9.50 3.59,8.62 5.01,8.26 5.31,7.70 4.82,6.32 5.50,5.76 6.76,6.51 7.37,6.32 8.00,5.00 8.88,5.09 9.24,6.51 9.80,6.81 11.18,6.32 11.74,7.00 10.99,8.26 11.18,8.87" fill="#a0a0a0" stroke="#a0a0a0" stroke-width="1"/><circle cx="8" cy="9.5" r="1.35" fill="#fff" stroke="#000" stroke-width="0.8"/></svg>
<svg style="left:137px;top:71px" width="15" height="13" shape-rendering="crispEdges"><rect x="3" y="0" width="4" height="1" fill="#000"/><rect x="9" y="0" width="4" height="1" fill="#000"/><rect x="3" y="1" width="1" height="1" fill="#000"/><rect x="4" y="1" width="2" height="1" fill="#fff"/><rect x="6" y="1" width="1" height="1" fill="#000"/><rect x="9" y="1" width="1" height="1" fill="#000"/><rect x="10" y="1" width="2" height="1" fill="#fff"/><rect x="12" y="1" width="1" height="1" fill="#000"/><rect x="3" y="2" width="4" height="1" fill="#000"/><rect x="9" y="2" width="4" height="1" fill="#000"/><rect x="2" y="3" width="6" height="1" fill="#000"/><rect x="9" y="3" width="6" height="1" fill="#000"/><rect x="2" y="4" width="1" height="1" fill="#000"/><rect x="3" y="4" width="1" height="1" fill="#fff"/><rect x="4" y="4" width="6" height="1" fill="#000"/><rect x="10" y="4" width="1" height="1" fill="#fff"/><rect x="11" y="4" width="4" height="1" fill="#000"/><rect x="1" y="5" width="14" height="1" fill="#000"/><rect x="0" y="6" width="2" height="1" fill="#000"/><rect x="2" y="6" width="1" height="1" fill="#fff"/><rect x="3" y="6" width="3" height="1" fill="#000"/><rect x="6" y="6" width="1" height="1" fill="#fff"/><rect x="7" y="6" width="2" height="1" fill="#000"/><rect x="9" y="6" width="1" height="1" fill="#fff"/><rect x="10" y="6" width="5" height="1" fill="#000"/><rect x="0" y="7" width="2" height="1" fill="#000"/><rect x="2" y="7" width="1" height="1" fill="#fff"/><rect x="3" y="7" width="3" height="1" fill="#000"/><rect x="6" y="7" width="1" height="1" fill="#fff"/><rect x="7" y="7" width="2" height="1" fill="#000"/><rect x="9" y="7" width="1" height="1" fill="#fff"/><rect x="10" y="7" width="5" height="1" fill="#000"/><rect x="0" y="8" width="2" height="1" fill="#000"/><rect x="2" y="8" width="1" height="1" fill="#fff"/><rect x="3" y="8" width="6" height="1" fill="#000"/><rect x="9" y="8" width="1" height="1" fill="#fff"/><rect x="10" y="8" width="5" height="1" fill="#000"/><rect x="0" y="9" width="7" height="1" fill="#000"/><rect x="8" y="9" width="7" height="1" fill="#000"/><rect x="0" y="10" width="1" height="1" fill="#000"/><rect x="1" y="10" width="1" height="1" fill="#fff"/><rect x="2" y="10" width="5" height="1" fill="#000"/><rect x="8" y="10" width="4" height="1" fill="#000"/><rect x="12" y="10" width="1" height="1" fill="#fff"/><rect x="13" y="10" width="2" height="1" fill="#000"/><rect x="0" y="11" width="1" height="1" fill="#000"/><rect x="1" y="11" width="1" height="1" fill="#fff"/><rect x="2" y="11" width="5" height="1" fill="#000"/><rect x="8" y="11" width="4" height="1" fill="#000"/><rect x="12" y="11" width="1" height="1" fill="#fff"/><rect x="13" y="11" width="2" height="1" fill="#000"/><rect x="0" y="12" width="7" height="1" fill="#000"/><rect x="8" y="12" width="7" height="1" fill="#000"/></svg>
<div class="a" style="left:163px;top:70px;width:1px;height:18px;background:#8c8c8c;"></div>
<svg style="left:170px;top:73px" width="16" height="12" shape-rendering="crispEdges"><rect x="11" y="0" width="1" height="1" fill="#000"/><rect x="10" y="1" width="1" height="1" fill="#000"/><rect x="9" y="2" width="2" height="1" fill="#000"/><rect x="8" y="3" width="1" height="1" fill="#000"/><rect x="9" y="3" width="2" height="1" fill="#0000ff"/><rect x="11" y="3" width="1" height="1" fill="#000"/><rect x="7" y="4" width="1" height="1" fill="#000"/><rect x="8" y="4" width="3" height="1" fill="#0000ff"/><rect x="11" y="4" width="1" height="1" fill="#000"/><rect x="6" y="5" width="1" height="1" fill="#000"/><rect x="7" y="5" width="4" height="1" fill="#0000ff"/><rect x="11" y="5" width="1" height="1" fill="#000"/><rect x="5" y="6" width="2" height="1" fill="#000"/><rect x="7" y="6" width="3" height="1" fill="#0000ff"/><rect x="10" y="6" width="1" height="1" fill="#000080"/><rect x="11" y="6" width="3" height="1" fill="#000"/><rect x="4" y="7" width="1" height="1" fill="#000"/><rect x="7" y="7" width="1" height="1" fill="#000"/><rect x="8" y="7" width="3" height="1" fill="#000080"/><rect x="11" y="7" width="3" height="1" fill="#0000ff"/><rect x="14" y="7" width="1" height="1" fill="#000"/><rect x="3" y="8" width="1" height="1" fill="#000"/><rect x="7" y="8" width="1" height="1" fill="#000"/><rect x="8" y="8" width="2" height="1" fill="#000080"/><rect x="10" y="8" width="3" height="1" fill="#0000ff"/><rect x="13" y="8" width="2" height="1" fill="#000"/><rect x="2" y="9" width="1" height="1" fill="#000"/><rect x="7" y="9" width="2" height="1" fill="#000"/><rect x="9" y="9" width="1" height="1" fill="#000080"/><rect x="10" y="9" width="2" height="1" fill="#0000ff"/><rect x="12" y="9" width="2" height="1" fill="#000"/><rect x="1" y="10" width="1" height="1" fill="#000"/><rect x="8" y="10" width="2" height="1" fill="#000"/><rect x="10" y="10" width="2" height="1" fill="#0000ff"/><rect x="12" y="10" width="1" height="1" fill="#000"/><rect x="0" y="11" width="1" height="1" fill="#000"/><rect x="10" y="11" width="2" height="1" fill="#000"/></svg>
<svg style="left:197px;top:74px" width="16" height="12" shape-rendering="crispEdges"><rect x="11" y="0" width="1" height="1" fill="#000"/><rect x="10" y="1" width="1" height="1" fill="#000"/><rect x="9" y="2" width="2" height="1" fill="#000"/><rect x="8" y="3" width="1" height="1" fill="#000"/><rect x="9" y="3" width="2" height="1" fill="#0000ff"/><rect x="11" y="3" width="1" height="1" fill="#000"/><rect x="7" y="4" width="1" height="1" fill="#000"/><rect x="8" y="4" width="3" height="1" fill="#0000ff"/><rect x="11" y="4" width="1" height="1" fill="#000"/><rect x="6" y="5" width="1" height="1" fill="#000"/><rect x="7" y="5" width="4" height="1" fill="#0000ff"/><rect x="11" y="5" width="1" height="1" fill="#000"/><rect x="5" y="6" width="2" height="1" fill="#000"/><rect x="7" y="6" width="3" height="1" fill="#0000ff"/><rect x="10" y="6" width="1" height="1" fill="#000080"/><rect x="11" y="6" width="3" height="1" fill="#000"/><rect x="4" y="7" width="1" height="1" fill="#000"/><rect x="7" y="7" width="1" height="1" fill="#000"/><rect x="8" y="7" width="3" height="1" fill="#000080"/><rect x="11" y="7" width="3" height="1" fill="#0000ff"/><rect x="14" y="7" width="1" height="1" fill="#000"/><rect x="3" y="8" width="1" height="1" fill="#000"/><rect x="7" y="8" width="1" height="1" fill="#000"/><rect x="8" y="8" width="2" height="1" fill="#000080"/><rect x="10" y="8" width="3" height="1" fill="#0000ff"/><rect x="13" y="8" width="2" height="1" fill="#000"/><rect x="2" y="9" width="1" height="1" fill="#000"/><rect x="7" y="9" width="2" height="1" fill="#000"/><rect x="9" y="9" width="1" height="1" fill="#000080"/><rect x="10" y="9" width="2" height="1" fill="#0000ff"/><rect x="12" y="9" width="2" height="1" fill="#000"/><rect x="1" y="10" width="1" height="1" fill="#000"/><rect x="8" y="10" width="2" height="1" fill="#000"/><rect x="10" y="10" width="2" height="1" fill="#0000ff"/><rect x="12" y="10" width="1" height="1" fill="#000"/><rect x="0" y="11" width="1" height="1" fill="#000"/><rect x="10" y="11" width="2" height="1" fill="#000"/></svg>
<svg style="left:224px;top:74px" width="16" height="12" shape-rendering="crispEdges"><rect x="11" y="0" width="1" height="1" fill="#000"/><rect x="10" y="1" width="1" height="1" fill="#000"/><rect x="9" y="2" width="2" height="1" fill="#000"/><rect x="8" y="3" width="1" height="1" fill="#000"/><rect x="9" y="3" width="2" height="1" fill="#0000ff"/><rect x="11" y="3" width="1" height="1" fill="#000"/><rect x="7" y="4" width="1" height="1" fill="#000"/><rect x="8" y="4" width="3" height="1" fill="#0000ff"/><rect x="11" y="4" width="1" height="1" fill="#000"/><rect x="6" y="5" width="1" height="1" fill="#000"/><rect x="7" y="5" width="4" height="1" fill="#0000ff"/><rect x="11" y="5" width="1" height="1" fill="#000"/><rect x="5" y="6" width="2" height="1" fill="#000"/><rect x="7" y="6" width="3" height="1" fill="#0000ff"/><rect x="10" y="6" width="1" height="1" fill="#000080"/><rect x="11" y="6" width="3" height="1" fill="#000"/><rect x="4" y="7" width="1" height="1" fill="#000"/><rect x="7" y="7" width="1" height="1" fill="#000"/><rect x="8" y="7" width="3" height="1" fill="#000080"/><rect x="11" y="7" width="3" height="1" fill="#0000ff"/><rect x="14" y="7" width="1" height="1" fill="#000"/><rect x="3" y="8" width="1" height="1" fill="#000"/><rect x="7" y="8" width="1" height="1" fill="#000"/><rect x="8" y="8" width="2" height="1" fill="#000080"/><rect x="10" y="8" width="3" height="1" fill="#0000ff"/><rect x="13" y="8" width="2" height="1" fill="#000"/><rect x="2" y="9" width="1" height="1" fill="#000"/><rect x="7" y="9" width="2" height="1" fill="#000"/><rect x="9" y="9" width="1" height="1" fill="#000080"/><rect x="10" y="9" width="2" height="1" fill="#0000ff"/><rect x="12" y="9" width="2" height="1" fill="#000"/><rect x="1" y="10" width="1" height="1" fill="#000"/><rect x="8" y="10" width="2" height="1" fill="#000"/><rect x="10" y="10" width="2" height="1" fill="#0000ff"/><rect x="12" y="10" width="1" height="1" fill="#000"/><rect x="0" y="11" width="1" height="1" fill="#000"/><rect x="10" y="11" width="2" height="1" fill="#000"/></svg>
<svg style="left:251px;top:74px" width="16" height="12" shape-rendering="crispEdges"><rect x="11" y="0" width="1" height="1" fill="#000"/><rect x="10" y="1" width="1" height="1" fill="#000"/><rect x="9" y="2" width="2" height="1" fill="#000"/><rect x="8" y="3" width="1" height="1" fill="#000"/><rect x="9" y="3" width="2" height="1" fill="#0000ff"/><rect x="11" y="3" width="1" height="1" fill="#000"/><rect x="7" y="4" width="1" height="1" fill="#000"/><rect x="8" y="4" width="3" height="1" fill="#0000ff"/><rect x="11" y="4" width="1" height="1" fill="#000"/><rect x="6" y="5" width="1" height="1" fill="#000"/><rect x="7" y="5" width="4" height="1" fill="#0000ff"/><rect x="11" y="5" width="1" height="1" fill="#000"/><rect x="5" y="6" width="2" height="1" fill="#000"/><rect x="7" y="6" width="3" height="1" fill="#0000ff"/><rect x="10" y="6" width="1" height="1" fill="#000080"/><rect x="11" y="6" width="3" height="1" fill="#000"/><rect x="4" y="7" width="1" height="1" fill="#000"/><rect x="7" y="7" width="1" height="1" fill="#000"/><rect x="8" y="7" width="3" height="1" fill="#000080"/><rect x="11" y="7" width="3" height="1" fill="#0000ff"/><rect x="14" y="7" width="1" height="1" fill="#000"/><rect x="3" y="8" width="1" height="1" fill="#000"/><rect x="7" y="8" width="1" height="1" fill="#000"/><rect x="8" y="8" width="2" height="1" fill="#000080"/><rect x="10" y="8" width="3" height="1" fill="#0000ff"/><rect x="13" y="8" width="2" height="1" fill="#000"/><rect x="2" y="9" width="1" height="1" fill="#000"/><rect x="7" y="9" width="2" height="1" fill="#000"/><rect x="9" y="9" width="1" height="1" fill="#000080"/><rect x="10" y="9" width="2" height="1" fill="#0000ff"/><rect x="12" y="9" width="2" height="1" fill="#000"/><rect x="1" y="10" width="1" height="1" fill="#000"/><rect x="8" y="10" width="2" height="1" fill="#000"/><rect x="10" y="10" width="2" height="1" fill="#0000ff"/><rect x="12" y="10" width="1" height="1" fill="#000"/><rect x="0" y="11" width="1" height="1" fill="#000"/><rect x="10" y="11" width="2" height="1" fill="#000"/></svg>
<svg style="left:197px;top:71px" width="9" height="6" shape-rendering="crispEdges"><rect x="2" y="0" width="2" height="1" fill="#000080"/><rect x="1" y="1" width="1" height="1" fill="#000080"/><rect x="5" y="1" width="1" height="1" fill="#000080"/><rect x="8" y="1" width="1" height="1" fill="#000080"/><rect x="0" y="2" width="1" height="1" fill="#000080"/><rect x="6" y="2" width="3" height="1" fill="#000080"/><rect x="0" y="3" width="1" height="1" fill="#000080"/><rect x="6" y="3" width="3" height="1" fill="#000080"/><rect x="1" y="4" width="1" height="1" fill="#000080"/><rect x="5" y="4" width="4" height="1" fill="#000080"/><rect x="2" y="5" width="1" height="1" fill="#000080"/></svg>
<svg style="left:224px;top:71px" width="9" height="6" shape-rendering="crispEdges"><rect x="5" y="0" width="2" height="1" fill="#000080"/><rect x="0" y="1" width="1" height="1" fill="#000080"/><rect x="3" y="1" width="1" height="1" fill="#000080"/><rect x="7" y="1" width="1" height="1" fill="#000080"/><rect x="0" y="2" width="3" height="1" fill="#000080"/><rect x="8" y="2" width="1" height="1" fill="#000080"/><rect x="0" y="3" width="3" height="1" fill="#000080"/><rect x="8" y="3" width="1" height="1" fill="#000080"/><rect x="0" y="4" width="4" height="1" fill="#000080"/><rect x="7" y="4" width="1" height="1" fill="#000080"/><rect x="6" y="5" width="1" height="1" fill="#000080"/></svg>
<svg style="left:251px;top:71px;" width="10" height="10" viewBox="0 0 10 10"><path d="M1 2.5L8.5 8.5M8.5 0.5L1.5 9.5" stroke="#800000" stroke-width="1.7"/></svg>
<div class="a" style="left:277px;top:70px;width:1px;height:18px;background:#8c8c8c;"></div>
<div class="a" style="left:281px;top:68px;width:27px;height:21px;background:#c6def3;border:1px solid #92c8f6"></div>
<svg style="left:276px;top:64px" width="24" height="21" shape-rendering="crispEdges"><rect x="12" y="8" width="2" height="1" fill="#000"/><rect x="16" y="8" width="2" height="1" fill="#880000"/><rect x="11" y="9" width="1" height="1" fill="#000"/><rect x="12" y="9" width="1" height="1" fill="#fff"/><rect x="13" y="9" width="2" height="1" fill="#000"/><rect x="16" y="9" width="5" height="1" fill="#880000"/><rect x="10" y="10" width="2" height="1" fill="#000"/><rect x="13" y="10" width="2" height="1" fill="#000"/><rect x="17" y="10" width="1" height="1" fill="#880000"/><rect x="20" y="10" width="3" height="1" fill="#880000"/><rect x="10" y="11" width="6" height="1" fill="#000"/><rect x="21" y="11" width="2" height="1" fill="#880000"/><rect x="9" y="12" width="2" height="1" fill="#000"/><rect x="14" y="12" width="2" height="1" fill="#000"/><rect x="21" y="12" width="2" height="1" fill="#880000"/><rect x="9" y="13" width="3" height="1" fill="#000"/><rect x="13" y="13" width="4" height="1" fill="#000"/><rect x="21" y="13" width="2" height="1" fill="#880000"/><rect x="10" y="15" width="2" height="1" fill="#880000"/><rect x="19" y="15" width="5" height="1" fill="#000"/><rect x="10" y="16" width="2" height="1" fill="#880000"/><rect x="18" y="16" width="1" height="1" fill="#000"/><rect x="21" y="16" width="2" height="1" fill="#000"/><rect x="10" y="17" width="3" height="1" fill="#880000"/><rect x="15" y="17" width="1" height="1" fill="#880000"/><rect x="20" y="17" width="2" height="1" fill="#000"/><rect x="11" y="18" width="6" height="1" fill="#880000"/><rect x="19" y="18" width="2" height="1" fill="#000"/><rect x="12" y="19" width="5" height="1" fill="#880000"/><rect x="18" y="19" width="2" height="1" fill="#000"/><rect x="23" y="19" width="1" height="1" fill="#000"/><rect x="15" y="20" width="1" height="1" fill="#880000"/><rect x="18" y="20" width="6" height="1" fill="#000"/></svg>
<div class="a" style="left:310px;top:70px;width:1px;height:18px;background:#8c8c8c;"></div>
<div class="a" style="left:314px;top:68px;width:27px;height:21px;background:#c6def3;border:1px solid #92c8f6"></div>
<div class="a" style="left:341px;top:68px;width:27px;height:21px;background:#c6def3;border:1px solid #92c8f6"></div>
<div class="a" style="left:368px;top:68px;width:27px;height:21px;background:#c6def3;border:1px solid #92c8f6"></div>
<svg style="left:316px;top:70px" width="17" height="16" shape-rendering="crispEdges"><rect x="2" y="2" width="15" height="1" fill="#000080"/><rect x="2" y="3" width="15" height="1" fill="#000080"/><rect x="2" y="4" width="1" height="1" fill="#000"/><rect x="16" y="4" width="1" height="1" fill="#000"/><rect x="2" y="5" width="1" height="1" fill="#000"/><rect x="4" y="5" width="3" height="1" fill="#000"/><rect x="8" y="5" width="3" height="1" fill="#000"/><rect x="12" y="5" width="3" height="1" fill="#000"/><rect x="16" y="5" width="1" height="1" fill="#000"/><rect x="2" y="6" width="1" height="1" fill="#000"/><rect x="16" y="6" width="1" height="1" fill="#000"/><rect x="2" y="7" width="1" height="1" fill="#000"/><rect x="4" y="7" width="3" height="1" fill="#000"/><rect x="8" y="7" width="3" height="1" fill="#000"/><rect x="12" y="7" width="3" height="1" fill="#000"/><rect x="16" y="7" width="1" height="1" fill="#000"/><rect x="2" y="8" width="1" height="1" fill="#000"/><rect x="16" y="8" width="1" height="1" fill="#000"/><rect x="6" y="9" width="1" height="1" fill="#000"/><rect x="10" y="10" width="6" height="1" fill="#000080"/><rect x="6" y="11" width="1" height="1" fill="#000"/><rect x="8" y="11" width="1" height="1" fill="#000"/><rect x="10" y="11" width="6" height="1" fill="#000080"/><rect x="6" y="13" width="1" height="1" fill="#000"/><rect x="10" y="14" width="6" height="1" fill="#000080"/><rect x="6" y="15" width="1" height="1" fill="#000"/><rect x="8" y="15" width="1" height="1" fill="#000"/><rect x="10" y="15" width="6" height="1" fill="#000080"/></svg>
<svg style="left:343px;top:70px" width="16" height="16" shape-rendering="crispEdges"><rect x="8" y="2" width="1" height="1" fill="#909000"/><rect x="10" y="2" width="1" height="1" fill="#000"/><rect x="5" y="3" width="1" height="1" fill="#909000"/><rect x="6" y="3" width="1" height="1" fill="#000"/><rect x="8" y="3" width="2" height="1" fill="#909000"/><rect x="10" y="3" width="1" height="1" fill="#000"/><rect x="12" y="3" width="1" height="1" fill="#909000"/><rect x="13" y="3" width="1" height="1" fill="#000"/><rect x="4" y="4" width="1" height="1" fill="#000"/><rect x="5" y="4" width="9" height="1" fill="#909000"/><rect x="14" y="4" width="1" height="1" fill="#000"/><rect x="5" y="5" width="8" height="1" fill="#909000"/><rect x="13" y="5" width="1" height="1" fill="#000"/><rect x="3" y="6" width="4" height="1" fill="#909000"/><rect x="7" y="6" width="2" height="1" fill="#000"/><rect x="9" y="6" width="4" height="1" fill="#909000"/><rect x="13" y="6" width="1" height="1" fill="#000"/><rect x="3" y="7" width="4" height="1" fill="#909000"/><rect x="7" y="7" width="1" height="1" fill="#000"/><rect x="10" y="7" width="4" height="1" fill="#909000"/><rect x="14" y="7" width="1" height="1" fill="#000"/><rect x="3" y="8" width="4" height="1" fill="#909000"/><rect x="7" y="8" width="1" height="1" fill="#000"/><rect x="10" y="8" width="4" height="1" fill="#909000"/><rect x="14" y="8" width="1" height="1" fill="#000"/><rect x="6" y="9" width="1" height="1" fill="#000"/><rect x="10" y="10" width="6" height="1" fill="#000080"/><rect x="6" y="11" width="1" height="1" fill="#000"/><rect x="8" y="11" width="1" height="1" fill="#000"/><rect x="10" y="11" width="6" height="1" fill="#000080"/><rect x="6" y="13" width="1" height="1" fill="#000"/><rect x="10" y="14" width="6" height="1" fill="#000080"/><rect x="6" y="15" width="1" height="1" fill="#000"/><rect x="8" y="15" width="1" height="1" fill="#000"/><rect x="10" y="15" width="6" height="1" fill="#000080"/></svg>
<svg style="left:370px;top:70px" width="16" height="16" shape-rendering="crispEdges"><rect x="5" y="2" width="3" height="1" fill="#0000ff"/><rect x="8" y="2" width="1" height="1" fill="#000"/><rect x="10" y="2" width="3" height="1" fill="#0000ff"/><rect x="13" y="2" width="1" height="1" fill="#000"/><rect x="5" y="3" width="4" height="1" fill="#0000ff"/><rect x="9" y="3" width="1" height="1" fill="#000"/><rect x="10" y="3" width="3" height="1" fill="#0000ff"/><rect x="13" y="3" width="1" height="1" fill="#000"/><rect x="5" y="4" width="4" height="1" fill="#0000ff"/><rect x="9" y="4" width="1" height="1" fill="#000"/><rect x="10" y="4" width="2" height="1" fill="#0000ff"/><rect x="12" y="4" width="1" height="1" fill="#000"/><rect x="6" y="5" width="5" height="1" fill="#0000ff"/><rect x="11" y="5" width="1" height="1" fill="#000"/><rect x="3" y="6" width="11" height="1" fill="#0000ff"/><rect x="14" y="6" width="1" height="1" fill="#000"/><rect x="3" y="7" width="11" height="1" fill="#0000ff"/><rect x="14" y="7" width="1" height="1" fill="#000"/><rect x="3" y="8" width="11" height="1" fill="#0000ff"/><rect x="14" y="8" width="1" height="1" fill="#000"/><rect x="6" y="9" width="1" height="1" fill="#000"/><rect x="10" y="10" width="6" height="1" fill="#000080"/><rect x="6" y="11" width="1" height="1" fill="#000"/><rect x="8" y="11" width="1" height="1" fill="#000"/><rect x="10" y="11" width="6" height="1" fill="#000080"/><rect x="6" y="13" width="1" height="1" fill="#000"/><rect x="10" y="14" width="6" height="1" fill="#000080"/><rect x="6" y="15" width="1" height="1" fill="#000"/><rect x="8" y="15" width="1" height="1" fill="#000"/><rect x="10" y="15" width="6" height="1" fill="#000080"/></svg>
<svg style="left:396px;top:69px" width="17" height="17" shape-rendering="crispEdges"><rect x="4" y="2" width="5" height="1" fill="#000"/><rect x="10" y="2" width="5" height="1" fill="#000"/><rect x="4" y="3" width="1" height="1" fill="#000"/><rect x="5" y="3" width="1" height="1" fill="#fff"/><rect x="6" y="3" width="3" height="1" fill="#000"/><rect x="10" y="3" width="1" height="1" fill="#000"/><rect x="11" y="3" width="1" height="1" fill="#fff"/><rect x="12" y="3" width="3" height="1" fill="#000"/><rect x="3" y="4" width="13" height="1" fill="#000"/><rect x="2" y="5" width="2" height="1" fill="#000"/><rect x="4" y="5" width="1" height="1" fill="#fff"/><rect x="5" y="5" width="3" height="1" fill="#000"/><rect x="8" y="5" width="1" height="1" fill="#fff"/><rect x="9" y="5" width="2" height="1" fill="#000"/><rect x="11" y="5" width="1" height="1" fill="#fff"/><rect x="12" y="5" width="5" height="1" fill="#000"/><rect x="2" y="6" width="2" height="1" fill="#000"/><rect x="4" y="6" width="1" height="1" fill="#fff"/><rect x="5" y="6" width="3" height="1" fill="#000"/><rect x="8" y="6" width="1" height="1" fill="#fff"/><rect x="9" y="6" width="2" height="1" fill="#000"/><rect x="11" y="6" width="1" height="1" fill="#fff"/><rect x="12" y="6" width="5" height="1" fill="#000"/><rect x="2" y="7" width="2" height="1" fill="#000"/><rect x="4" y="7" width="1" height="1" fill="#fff"/><rect x="5" y="7" width="6" height="1" fill="#000"/><rect x="11" y="7" width="1" height="1" fill="#fff"/><rect x="12" y="7" width="5" height="1" fill="#000"/><rect x="2" y="8" width="7" height="1" fill="#000"/><rect x="10" y="8" width="7" height="1" fill="#000"/><rect x="6" y="10" width="1" height="1" fill="#000"/><rect x="10" y="11" width="6" height="1" fill="#000080"/><rect x="6" y="12" width="1" height="1" fill="#000"/><rect x="8" y="12" width="1" height="1" fill="#000"/><rect x="10" y="12" width="6" height="1" fill="#000080"/><rect x="6" y="14" width="1" height="1" fill="#000"/><rect x="10" y="15" width="6" height="1" fill="#000080"/><rect x="6" y="16" width="1" height="1" fill="#000"/><rect x="8" y="16" width="1" height="1" fill="#000"/><rect x="10" y="16" width="6" height="1" fill="#000080"/></svg>
<div class="a" style="left:424px;top:70px;width:1px;height:19px;background:#8c8c8c;"></div>
<div class="a" style="left:428px;top:68px;width:124px;height:22px;background:#e1e1e1;border:1px solid #adadad;border-bottom:none"></div>
<div class="tr" style="left:432px;top:72px;transform:scaleX(0.865)">Crystal Syntax</div>
<svg style="left:539px;top:78px;" width="8" height="5" viewBox="0 0 8 5"><path d="M0.5 0.5L4 4L7.5 0.5" stroke="#404040" fill="none"/></svg>
<div class="a" style="left:554px;top:70px;width:1px;height:19px;background:#8c8c8c;"></div>
<div class="a" style="left:558px;top:68px;width:160px;height:22px;background:#e1e1e1;border:1px solid #adadad;border-bottom:none"></div>
<div class="tr" style="left:562px;top:72px;transform:scaleX(0.865)">Exceptions For Nulls</div>
<svg style="left:705px;top:78px;" width="8" height="5" viewBox="0 0 8 5"><path d="M0.5 0.5L4 4L7.5 0.5" stroke="#404040" fill="none"/></svg>
<div class="a" style="left:720px;top:70px;width:1px;height:19px;background:#8c8c8c;"></div>
<svg style="left:730px;top:74px;" width="12" height="11" viewBox="0 0 12 11"><path d="M1 10L5 1M6.5 10L10.5 1" stroke="#0000ff" stroke-width="2"/></svg>
<div class="a" style="left:1px;top:93px;width:207px;height:1px;background:#a0a0a0;"></div>
<div class="a" style="left:1px;top:94px;width:207px;height:703px;background:#f0f0f0;"></div>
<div class="a" style="left:6px;top:101px;width:164px;height:1px;background:#a0a0a0;"></div>
<div class="a" style="left:6px;top:102px;width:164px;height:1px;background:#fff;"></div>
<div class="a" style="left:6px;top:105px;width:164px;height:1px;background:#a0a0a0;"></div>
<div class="a" style="left:6px;top:106px;width:164px;height:1px;background:#fff;"></div>
<div class="a" style="left:169px;top:99px;width:1px;height:3px;background:#a0a0a0;"></div>
<div class="a" style="left:169px;top:103px;width:1px;height:3px;background:#a0a0a0;"></div>
<div class="a" style="left:171px;top:96px;width:12px;height:12px;background:#f0f0f0;border-style:solid;border-width:1px;border-color:#fff #808080 #808080 #fff"></div>
<svg style="left:171px;top:96px;" width="12" height="12" viewBox="0 0 12 12"><path d="M3 4H9L6 7.5Z" fill="#a0a0a0"/></svg>
<div class="a" style="left:185px;top:97px;width:11px;height:11px;background:#f0f0f0;border-style:solid;border-width:1px;border-color:#fff #808080 #808080 #fff"></div>
<svg style="left:185px;top:97px;" width="11" height="11" viewBox="0 0 11 11"><path d="M2.5 3L7.5 8M7.5 3L2.5 8" stroke="#000" stroke-width="1.8"/></svg>
<div class="a" style="left:4px;top:110px;width:194px;height:670px;background:#fff;"></div>
<div class="a" style="left:201px;top:96px;width:3px;height:699px;background:#fff;"></div>
<div class="a" style="left:208px;top:94px;width:1px;height:703px;background:#6a6a6a;"></div>
<div class="a" style="left:4px;top:780px;width:194px;height:15px;background:#f0f0f0;"></div>
<div class="a" style="left:21px;top:780px;width:108px;height:15px;background:#cdcdcd;"></div>
<svg style="left:9px;top:784px;" width="7" height="8" viewBox="0 0 7 8"><path d="M5.5 0.5L1.5 3.5L5.5 6.5" stroke="#606060" stroke-width="1.6" fill="none"/></svg>
<svg style="left:186px;top:784px;" width="7" height="8" viewBox="0 0 7 8"><path d="M1.5 0.5L5.5 3.5L1.5 6.5" stroke="#606060" stroke-width="1.6" fill="none"/></svg>
<div class="a" style="left:1px;top:795px;width:208px;height:1px;background:#a0a0a0;"></div>
<div class="a" style="left:1px;top:796px;width:1020px;height:1px;background:#fff;"></div>
<div class="a" style="left:209px;top:94px;width:812px;height:703px;background:#f0f0f0;"></div>
<div class="a" style="left:208px;top:94px;width:812px;height:1px;background:#696969;"></div>
<div class="a" style="left:208px;top:95px;width:812px;height:1px;background:#8a8a8a;"></div>
<div class="a" style="left:209px;top:96px;width:812px;height:1px;background:#fff;"></div>
<div class="a" style="left:209px;top:96px;width:1px;height:700px;background:#fff;"></div>
<div class="a" style="left:481px;top:97px;width:1px;height:298px;background:#6a6a6a;"></div>
<div class="a" style="left:476px;top:97px;width:2px;height:296px;background:#fff;"></div>
<div class="a" style="left:753px;top:97px;width:1px;height:298px;background:#6a6a6a;"></div>
<div class="a" style="left:749px;top:97px;width:2px;height:296px;background:#fff;"></div>
<div class="a" style="left:227px;top:100px;width:246px;height:292px;background:#fff;"></div>
<div class="a" style="left:499px;top:100px;width:230px;height:277px;background:#fff;"></div>
<div class="a" style="left:771px;top:100px;width:245px;height:292px;background:#fff;"></div>
<div class="a" style="left:214px;top:102px;width:11px;height:11px;background:#f0f0f0;border-style:solid;border-width:1px;border-color:#fff #808080 #808080 #fff"></div>
<svg style="left:214px;top:102px;" width="11" height="11" viewBox="0 0 11 11"><path d="M2.5 3L7.5 8M7.5 3L2.5 8" stroke="#000" stroke-width="1.8"/></svg>
<div class="a" style="left:213px;top:114px;width:12px;height:12px;background:#f0f0f0;border-style:solid;border-width:1px;border-color:#fff #808080 #808080 #fff"></div>
<svg style="left:213px;top:114px;" width="12" height="12" viewBox="0 0 12 12"><path d="M7 2.5V8.5L3.5 5.5Z" fill="#000"/></svg>
<div class="a" style="left:218px;top:128px;width:1px;height:262px;background:#a0a0a0;"></div>
<div class="a" style="left:222px;top:128px;width:1px;height:262px;background:#a0a0a0;"></div>
<div class="a" style="left:217px;top:390px;width:2px;height:1px;background:#a0a0a0;"></div>
<div class="a" style="left:221px;top:390px;width:2px;height:1px;background:#a0a0a0;"></div>
<div class="a" style="left:486px;top:102px;width:11px;height:11px;background:#f0f0f0;border-style:solid;border-width:1px;border-color:#fff #808080 #808080 #fff"></div>
<svg style="left:486px;top:102px;" width="11" height="11" viewBox="0 0 11 11"><path d="M2.5 3L7.5 8M7.5 3L2.5 8" stroke="#000" stroke-width="1.8"/></svg>
<div class="a" style="left:485px;top:114px;width:12px;height:12px;background:#f0f0f0;border-style:solid;border-width:1px;border-color:#fff #808080 #808080 #fff"></div>
<svg style="left:485px;top:114px;" width="12" height="12" viewBox="0 0 12 12"><path d="M7 2.5V8.5L3.5 5.5Z" fill="#000"/></svg>
<div class="a" style="left:490px;top:128px;width:1px;height:262px;background:#a0a0a0;"></div>
<div class="a" style="left:494px;top:128px;width:1px;height:262px;background:#a0a0a0;"></div>
<div class="a" style="left:489px;top:390px;width:2px;height:1px;background:#a0a0a0;"></div>
<div class="a" style="left:493px;top:390px;width:2px;height:1px;background:#a0a0a0;"></div>
<div class="a" style="left:758px;top:102px;width:11px;height:11px;background:#f0f0f0;border-style:solid;border-width:1px;border-color:#fff #808080 #808080 #fff"></div>
<svg style="left:758px;top:102px;" width="11" height="11" viewBox="0 0 11 11"><path d="M2.5 3L7.5 8M7.5 3L2.5 8" stroke="#000" stroke-width="1.8"/></svg>
<div class="a" style="left:757px;top:114px;width:12px;height:12px;background:#f0f0f0;border-style:solid;border-width:1px;border-color:#fff #808080 #808080 #fff"></div>
<svg style="left:757px;top:114px;" width="12" height="12" viewBox="0 0 12 12"><path d="M7 2.5V8.5L3.5 5.5Z" fill="#000"/></svg>
<div class="a" style="left:762px;top:128px;width:1px;height:262px;background:#a0a0a0;"></div>
<div class="a" style="left:766px;top:128px;width:1px;height:262px;background:#a0a0a0;"></div>
<div class="a" style="left:761px;top:390px;width:2px;height:1px;background:#a0a0a0;"></div>
<div class="a" style="left:765px;top:390px;width:2px;height:1px;background:#a0a0a0;"></div>
<div class="a" style="left:729px;top:100px;width:17px;height:277px;background:#f0f0f0;"></div>
<div class="a" style="left:730px;top:117px;width:14px;height:116px;background:#cdcdcd;"></div>
<svg style="left:733px;top:106px;" width="8" height="6" viewBox="0 0 8 6"><path d="M0.5 5L4 1.5L7.5 5" stroke="#606060" stroke-width="1.6" fill="none"/></svg>
<svg style="left:733px;top:364px;" width="8" height="6" viewBox="0 0 8 6"><path d="M0.5 1L4 4.5L7.5 1" stroke="#606060" stroke-width="1.6" fill="none"/></svg>
<div class="a" style="left:499px;top:377px;width:230px;height:15px;background:#f0f0f0;"></div>
<div class="a" style="left:516px;top:377px;width:105px;height:15px;background:#cdcdcd;"></div>
<svg style="left:504px;top:381px;" width="7" height="8" viewBox="0 0 7 8"><path d="M5.5 0.5L1.5 3.5L5.5 6.5" stroke="#606060" stroke-width="1.6" fill="none"/></svg>
<svg style="left:716px;top:381px;" width="7" height="8" viewBox="0 0 7 8"><path d="M1.5 0.5L5.5 3.5L1.5 6.5" stroke="#606060" stroke-width="1.6" fill="none"/></svg>
<div class="a" style="left:209px;top:396px;width:812px;height:1px;background:#fff;"></div>
<svg style="left:209px;top:400px" width="20" height="379"><defs><pattern id="ck" width="2" height="2" patternUnits="userSpaceOnUse"><rect width="2" height="2" fill="#fff"/><rect width="1" height="1" fill="#b0b0b0"/><rect x="1" y="1" width="1" height="1" fill="#b0b0b0"/></pattern></defs><rect width="20" height="379" fill="url(#ck)" shape-rendering="crispEdges"/></svg>
<div class="a" style="left:229px;top:400px;width:774px;height:379px;background:#fff;"></div>
<div class="a" style="left:1003px;top:400px;width:17px;height:378px;background:#f0f0f0;"></div>
<svg style="left:1006px;top:406px;" width="9" height="6" viewBox="0 0 9 6"><path d="M0.5 5L4.5 1.5L8.5 5" stroke="#a0a0a0" stroke-width="1.6" fill="none"/></svg>
<svg style="left:1006px;top:767px;" width="9" height="6" viewBox="0 0 9 6"><path d="M0.5 1L4.5 4.5L8.5 1" stroke="#a0a0a0" stroke-width="1.6" fill="none"/></svg>
<div class="a" style="left:209px;top:779px;width:794px;height:16px;background:#f0f0f0;"></div>
<div class="a" style="left:226px;top:779px;width:36px;height:15px;background:#cdcdcd;"></div>
<svg style="left:214px;top:783px;" width="7" height="8" viewBox="0 0 7 8"><path d="M5.5 0.5L1.5 3.5L5.5 6.5" stroke="#606060" stroke-width="1.6" fill="none"/></svg>
<svg style="left:991px;top:782px;" width="7" height="8" viewBox="0 0 7 8"><path d="M1.5 0.5L5.5 3.5L1.5 6.5" stroke="#606060" stroke-width="1.6" fill="none"/></svg>
<div class="a" style="left:1014px;top:785px;width:2px;height:2px;background:#a8a8a8;"></div>
<div class="a" style="left:1011px;top:788px;width:2px;height:2px;background:#a8a8a8;"></div>
<div class="a" style="left:1014px;top:788px;width:2px;height:2px;background:#a8a8a8;"></div>
<div class="a" style="left:1008px;top:791px;width:2px;height:2px;background:#a8a8a8;"></div>
<div class="a" style="left:1011px;top:791px;width:2px;height:2px;background:#a8a8a8;"></div>
<div class="a" style="left:1014px;top:791px;width:2px;height:2px;background:#a8a8a8;"></div>
<div class="a" style="left:1020px;top:94px;width:1px;height:703px;background:#fff;"></div>
<div class="a" style="left:1019px;top:96px;width:1px;height:700px;background:#fafafa;"></div>
<svg style="left:26px;top:110px;" width="17" height="16" viewBox="0 0 17 16"><g transform="translate(10.50,7.00)" fill="#000"><circle r="4.54"/><rect x="-1.35" y="-6.30" width="2.7" height="12.60" transform="rotate(22.5)"/><rect x="-1.35" y="-6.30" width="2.7" height="12.60" transform="rotate(67.5)"/><rect x="-1.35" y="-6.30" width="2.7" height="12.60" transform="rotate(112.5)"/><rect x="-1.35" y="-6.30" width="2.7" height="12.60" transform="rotate(157.5)"/></g><g transform="translate(9.50,6.00)" fill="#808000"><circle r="4.54"/><rect x="-1.35" y="-6.30" width="2.7" height="12.60" transform="rotate(22.5)"/><rect x="-1.35" y="-6.30" width="2.7" height="12.60" transform="rotate(67.5)"/><rect x="-1.35" y="-6.30" width="2.7" height="12.60" transform="rotate(112.5)"/><rect x="-1.35" y="-6.30" width="2.7" height="12.60" transform="rotate(157.5)"/></g><circle cx="9.80" cy="6.30" r="2.08" fill="#000"/><circle cx="10.10" cy="6.00" r="0.88" fill="#ffff60"/><rect x="0.5" y="5.5" width="8" height="10" fill="#fff" stroke="#000" stroke-width="1.6"/><path d="M2.5 8V10M4.5 7V10M6.5 8V10" stroke="#0000ff" stroke-width="1.2"/><path d="M2 12.5H7M2 14.5H7" stroke="#606060"/></svg>
<div class="tr" style="left:47px;top:111px;">Report Custom Functions</div>
<svg style="left:11px;top:130px;shape-rendering:crispEdges" width="9" height="9" viewBox="0 0 9 9"><rect x="0.5" y="0.5" width="8" height="8" rx="1" fill="#f4f4f4" stroke="#919191"/><path d="M2 4.5H7" stroke="#3c5a9c" stroke-width="1"/><path d="M4.5 2V7" stroke="#3c5a9c" stroke-width="1"/></svg>
<svg style="left:26px;top:126px;" width="17" height="16" viewBox="0 0 17 16"><g transform="translate(10.50,7.00)" fill="#000"><circle r="4.54"/><rect x="-1.35" y="-6.30" width="2.7" height="12.60" transform="rotate(22.5)"/><rect x="-1.35" y="-6.30" width="2.7" height="12.60" transform="rotate(67.5)"/><rect x="-1.35" y="-6.30" width="2.7" height="12.60" transform="rotate(112.5)"/><rect x="-1.35" y="-6.30" width="2.7" height="12.60" transform="rotate(157.5)"/></g><g transform="translate(9.50,6.00)" fill="#808000"><circle r="4.54"/><rect x="-1.35" y="-6.30" width="2.7" height="12.60" transform="rotate(22.5)"/><rect x="-1.35" y="-6.30" width="2.7" height="12.60" transform="rotate(67.5)"/><rect x="-1.35" y="-6.30" width="2.7" height="12.60" transform="rotate(112.5)"/><rect x="-1.35" y="-6.30" width="2.7" height="12.60" transform="rotate(157.5)"/></g><circle cx="9.80" cy="6.30" r="2.08" fill="#000"/><circle cx="10.10" cy="6.00" r="0.88" fill="#ffff60"/><path d="M0.5 5.5H7.5V15.5H1.5L0.5 14.5Z" fill="#d0d0d0" stroke="#000" stroke-width="1.4"/><rect x="4" y="9" width="2" height="2" fill="#ff0000"/><path d="M2 8.5H6M2 12.5H6" stroke="#909090"/></svg>
<div class="tr" style="left:47px;top:127px;">Repository Custom Functions</div>
<svg style="left:11px;top:146px;shape-rendering:crispEdges" width="9" height="9" viewBox="0 0 9 9"><rect x="0.5" y="0.5" width="8" height="8" rx="1" fill="#f4f4f4" stroke="#919191"/><path d="M2 4.5H7" stroke="#3c5a9c" stroke-width="1"/><path d="M4.5 2V7" stroke="#3c5a9c" stroke-width="1"/></svg>
<svg style="left:26px;top:143px;" width="16" height="14" viewBox="0 0 16 14"><defs><pattern id="chk" width="2" height="2" patternUnits="userSpaceOnUse"><rect width="2" height="2" fill="#fff"/><rect width="1" height="1" fill="#ffff00"/><rect x="1" y="1" width="1" height="1" fill="#ffff00"/></pattern></defs><path d="M1.5 2.5L2.5 0.5H7.5L8.5 2.5H14.5V12.5H1.5Z" fill="url(#chk)" stroke="#808080"/><path d="M15.5 3V13.5H2" stroke="#000" fill="none"/></svg>
<div class="tr" style="left:47px;top:143px;">Formula Fields</div>
<svg style="left:26px;top:159px;" width="16" height="14" viewBox="0 0 16 14"><defs><pattern id="chk" width="2" height="2" patternUnits="userSpaceOnUse"><rect width="2" height="2" fill="#fff"/><rect width="1" height="1" fill="#ffff00"/><rect x="1" y="1" width="1" height="1" fill="#ffff00"/></pattern></defs><path d="M1.5 2.5L2.5 0.5H7.5L8.5 2.5H14.5V12.5H1.5Z" fill="url(#chk)" stroke="#808080"/><path d="M15.5 3V13.5H2" stroke="#000" fill="none"/></svg>
<div class="tr" style="left:47px;top:159px;">SQL Expression Fields</div>
<svg style="left:11px;top:178px;shape-rendering:crispEdges" width="9" height="9" viewBox="0 0 9 9"><rect x="0.5" y="0.5" width="8" height="8" rx="1" fill="#f4f4f4" stroke="#919191"/><path d="M2 4.5H7" stroke="#3c5a9c" stroke-width="1"/><path d="M4.5 2V7" stroke="#3c5a9c" stroke-width="1"/></svg>
<svg style="left:26px;top:175px;" width="16" height="14" viewBox="0 0 16 14"><defs><pattern id="chk" width="2" height="2" patternUnits="userSpaceOnUse"><rect width="2" height="2" fill="#fff"/><rect width="1" height="1" fill="#ffff00"/><rect x="1" y="1" width="1" height="1" fill="#ffff00"/></pattern></defs><path d="M1.5 2.5L2.5 0.5H7.5L8.5 2.5H14.5V12.5H1.5Z" fill="url(#chk)" stroke="#808080"/><path d="M15.5 3V13.5H2" stroke="#000" fill="none"/></svg>
<div class="tr" style="left:47px;top:175px;">Selection Formulas</div>
<svg style="left:11px;top:194px;shape-rendering:crispEdges" width="9" height="9" viewBox="0 0 9 9"><rect x="0.5" y="0.5" width="8" height="8" rx="1" fill="#f4f4f4" stroke="#919191"/><path d="M2 4.5H7" stroke="#3c5a9c" stroke-width="1"/></svg>
<svg style="left:26px;top:191px;" width="16" height="14" viewBox="0 0 16 14"><defs><pattern id="chk" width="2" height="2" patternUnits="userSpaceOnUse"><rect width="2" height="2" fill="#fff"/><rect width="1" height="1" fill="#ffff00"/><rect x="1" y="1" width="1" height="1" fill="#ffff00"/></pattern></defs><path d="M1.5 2.5L2.5 0.5H7.5L8.5 2.5H14.5V12.5H1.5Z" fill="url(#chk)" stroke="#808080"/><path d="M15.5 3V13.5H2" stroke="#000" fill="none"/></svg>
<div class="tr" style="left:47px;top:191px;">Formatting Formulas</div>
<svg style="left:49px;top:207px;" width="12" height="14" viewBox="0 0 12 14"><path d="M0.5 0.5H9.5L11.5 2.5V13.5H0.5Z" fill="#fff" stroke="#808080"/><path d="M2 9.5H10M2 11.5H10" stroke="#808080"/><rect x="3" y="3" width="6" height="2" fill="#000"/><circle cx="3.5" cy="4" r="1.6" fill="#00e0e0" stroke="#000" stroke-width="0.6"/><path d="M2 7.5H10" stroke="#808080"/></svg>
<div class="tr" style="left:66px;top:207px;">Report Header</div>
<svg style="left:30px;top:226px;shape-rendering:crispEdges" width="9" height="9" viewBox="0 0 9 9"><rect x="0.5" y="0.5" width="8" height="8" rx="1" fill="#f4f4f4" stroke="#919191"/><path d="M2 4.5H7" stroke="#3c5a9c" stroke-width="1"/><path d="M4.5 2V7" stroke="#3c5a9c" stroke-width="1"/></svg>
<svg style="left:45px;top:223px;" width="16" height="14" viewBox="0 0 16 14"><path d="M4.5 0.5H13L15.5 3V13.5H4.5Z" fill="#fff" stroke="#7a7aba"/><path d="M5 1H12V13H5Z" fill="#d8e4f8"/><rect x="0.5" y="5.5" width="11" height="5" fill="#a8c8f0" stroke="#3050c0" stroke-width="1.2"/><path d="M2 7.5H10" stroke="#e0f0ff"/></svg>
<div class="tr" style="left:66px;top:223px;">Page Header</div>
<svg style="left:30px;top:242px;shape-rendering:crispEdges" width="9" height="9" viewBox="0 0 9 9"><rect x="0.5" y="0.5" width="8" height="8" rx="1" fill="#f4f4f4" stroke="#919191"/><path d="M2 4.5H7" stroke="#3c5a9c" stroke-width="1"/></svg>
<svg style="left:45px;top:239px;" width="16" height="14" viewBox="0 0 16 14"><path d="M3 0.5Q1.5 0.5 1.5 3V5L0 6L1.5 7V10Q1.5 11.5 3 11.5" stroke="#0000ff" stroke-width="1.3" fill="none"/><path d="M4.5 0.5H14L15.5 2V13.5H4.5Z" fill="#fff" stroke="#000" stroke-width="1.2"/><path d="M6 5.5H8M12 5.5H14M6 8.5H14M6 10.5H14M6 12.5H14" stroke="#606060"/><rect x="10" y="3" width="1" height="3" fill="#909090"/></svg>
<div class="tr" style="left:66px;top:239px;">Details</div>
<svg style="left:49px;top:258px;shape-rendering:crispEdges" width="9" height="9" viewBox="0 0 9 9"><rect x="0.5" y="0.5" width="8" height="8" rx="1" fill="#f4f4f4" stroke="#919191"/><path d="M2 4.5H7" stroke="#3c5a9c" stroke-width="1"/></svg>
<svg style="left:64px;top:255px;" width="16" height="14" viewBox="0 0 16 14"><path d="M4.5 0.5H13L15.5 3V13.5H4.5Z" fill="#fff" stroke="#7a7aba"/><path d="M5 1H12V13H5Z" fill="#d8e4f8"/><rect x="0.5" y="5.5" width="11" height="5" fill="#a8c8f0" stroke="#3050c0" stroke-width="1.2"/><path d="M2 7.5H10" stroke="#e0f0ff"/></svg>
<div class="tr" style="left:85px;top:255px;">Details a</div>
<svg style="left:84px;top:278px;" width="6" height="1" viewBox="0 0 6 1"><rect x="0" y="0" width="1" height="1" fill="#808080"/><rect x="2" y="0" width="1" height="1" fill="#808080"/><rect x="4" y="0" width="1" height="1" fill="#808080"/></svg>
<svg style="left:91px;top:275px;" width="11" height="9" viewBox="0 0 11 9"><rect x="0.5" y="0.5" width="10" height="8" fill="#fff" stroke="#3a70c8"/></svg>
<div class="tr" style="left:110px;top:271px;">Box2</div>
<svg style="left:68px;top:290px;shape-rendering:crispEdges" width="9" height="9" viewBox="0 0 9 9"><rect x="0.5" y="0.5" width="8" height="8" rx="1" fill="#f4f4f4" stroke="#919191"/><path d="M2 4.5H7" stroke="#3c5a9c" stroke-width="1"/></svg>
<svg style="left:84px;top:294px;" width="6" height="1" viewBox="0 0 6 1"><rect x="0" y="0" width="1" height="1" fill="#808080"/><rect x="2" y="0" width="1" height="1" fill="#808080"/><rect x="4" y="0" width="1" height="1" fill="#808080"/></svg>
<svg style="left:92px;top:289px" width="12" height="10" shape-rendering="crispEdges"><rect x="0" y="0" width="12" height="1" fill="#8a7a7a"/><rect x="0" y="1" width="1" height="1" fill="#8a7a7a"/><rect x="1" y="1" width="10" height="1" fill="#10a0c8"/><rect x="11" y="1" width="1" height="1" fill="#8a7a7a"/><rect x="0" y="2" width="1" height="1" fill="#8a7a7a"/><rect x="1" y="2" width="1" height="1" fill="#10a0c8"/><rect x="2" y="2" width="1" height="1" fill="#ffe000"/><rect x="3" y="2" width="8" height="1" fill="#10a0c8"/><rect x="11" y="2" width="1" height="1" fill="#8a7a7a"/><rect x="0" y="3" width="1" height="1" fill="#8a7a7a"/><rect x="1" y="3" width="3" height="1" fill="#ffe000"/><rect x="4" y="3" width="2" height="1" fill="#10a0c8"/><rect x="6" y="3" width="1" height="1" fill="#fff"/><rect x="7" y="3" width="4" height="1" fill="#10a0c8"/><rect x="11" y="3" width="1" height="1" fill="#8a7a7a"/><rect x="0" y="4" width="1" height="1" fill="#8a7a7a"/><rect x="1" y="4" width="1" height="1" fill="#10a0c8"/><rect x="2" y="4" width="1" height="1" fill="#ffe000"/><rect x="3" y="4" width="2" height="1" fill="#10a0c8"/><rect x="5" y="4" width="3" height="1" fill="#fff"/><rect x="8" y="4" width="3" height="1" fill="#10a0c8"/><rect x="11" y="4" width="1" height="1" fill="#8a7a7a"/><rect x="0" y="5" width="1" height="1" fill="#8a7a7a"/><rect x="1" y="5" width="3" height="1" fill="#10a0c8"/><rect x="4" y="5" width="5" height="1" fill="#fff"/><rect x="9" y="5" width="2" height="1" fill="#10a0c8"/><rect x="11" y="5" width="1" height="1" fill="#8a7a7a"/><rect x="0" y="6" width="1" height="1" fill="#8a7a7a"/><rect x="1" y="6" width="4" height="1" fill="#10a0c8"/><rect x="5" y="6" width="1" height="1" fill="#fff"/><rect x="6" y="6" width="1" height="1" fill="#10a0c8"/><rect x="7" y="6" width="2" height="1" fill="#fff"/><rect x="9" y="6" width="2" height="1" fill="#10a0c8"/><rect x="11" y="6" width="1" height="1" fill="#8a7a7a"/><rect x="0" y="7" width="1" height="1" fill="#8a7a7a"/><rect x="1" y="7" width="4" height="1" fill="#10a0c8"/><rect x="5" y="7" width="1" height="1" fill="#fff"/><rect x="6" y="7" width="1" height="1" fill="#10a0c8"/><rect x="7" y="7" width="2" height="1" fill="#fff"/><rect x="9" y="7" width="2" height="1" fill="#10a0c8"/><rect x="11" y="7" width="1" height="1" fill="#8a7a7a"/><rect x="0" y="8" width="1" height="1" fill="#8a7a7a"/><rect x="1" y="8" width="10" height="1" fill="#10a0c8"/><rect x="11" y="8" width="1" height="1" fill="#8a7a7a"/><rect x="0" y="9" width="12" height="1" fill="#8a7a7a"/></svg>
<div class="tr" style="left:110px;top:287px;">Picture1</div>
<div class="a" style="left:121px;top:302px;width:77px;height:16px;background:#f0f0f0;"></div>
<svg style="left:102px;top:302px" width="17" height="15" shape-rendering="crispEdges"><rect x="5" y="0" width="12" height="1" fill="#000"/><rect x="5" y="1" width="1" height="1" fill="#000"/><rect x="6" y="1" width="9" height="1" fill="#fff"/><rect x="15" y="1" width="2" height="1" fill="#000"/><rect x="5" y="2" width="1" height="1" fill="#000"/><rect x="6" y="2" width="1" height="1" fill="#fff"/><rect x="8" y="2" width="5" height="1" fill="#000"/><rect x="15" y="2" width="1" height="1" fill="#fff"/><rect x="16" y="2" width="1" height="1" fill="#000"/><rect x="5" y="3" width="1" height="1" fill="#000"/><rect x="6" y="3" width="1" height="1" fill="#fff"/><rect x="15" y="3" width="1" height="1" fill="#fff"/><rect x="16" y="3" width="1" height="1" fill="#000"/><rect x="5" y="4" width="1" height="1" fill="#000"/><rect x="6" y="4" width="1" height="1" fill="#fff"/><rect x="8" y="4" width="1" height="1" fill="#900000"/><rect x="12" y="4" width="2" height="1" fill="#000"/><rect x="15" y="4" width="1" height="1" fill="#fff"/><rect x="16" y="4" width="1" height="1" fill="#000"/><rect x="5" y="5" width="1" height="1" fill="#000"/><rect x="6" y="5" width="1" height="1" fill="#fff"/><rect x="8" y="5" width="1" height="1" fill="#900000"/><rect x="11" y="5" width="1" height="1" fill="#900000"/><rect x="15" y="5" width="1" height="1" fill="#fff"/><rect x="16" y="5" width="1" height="1" fill="#000"/><rect x="3" y="6" width="3" height="1" fill="#000"/><rect x="6" y="6" width="1" height="1" fill="#fff"/><rect x="8" y="6" width="5" height="1" fill="#900000"/><rect x="13" y="6" width="2" height="1" fill="#000"/><rect x="15" y="6" width="1" height="1" fill="#fff"/><rect x="16" y="6" width="1" height="1" fill="#000"/><rect x="3" y="7" width="1" height="1" fill="#000"/><rect x="5" y="7" width="1" height="1" fill="#000"/><rect x="6" y="7" width="1" height="1" fill="#fff"/><rect x="8" y="7" width="1" height="1" fill="#900000"/><rect x="11" y="7" width="1" height="1" fill="#900000"/><rect x="15" y="7" width="1" height="1" fill="#fff"/><rect x="16" y="7" width="1" height="1" fill="#000"/><rect x="3" y="8" width="1" height="1" fill="#000"/><rect x="5" y="8" width="1" height="1" fill="#000"/><rect x="6" y="8" width="1" height="1" fill="#fff"/><rect x="8" y="8" width="1" height="1" fill="#900000"/><rect x="12" y="8" width="2" height="1" fill="#000"/><rect x="15" y="8" width="1" height="1" fill="#fff"/><rect x="16" y="8" width="1" height="1" fill="#000"/><rect x="3" y="9" width="1" height="1" fill="#000"/><rect x="5" y="9" width="1" height="1" fill="#000"/><rect x="6" y="9" width="1" height="1" fill="#fff"/><rect x="15" y="9" width="1" height="1" fill="#fff"/><rect x="16" y="9" width="1" height="1" fill="#000"/><rect x="2" y="10" width="1" height="1" fill="#000"/><rect x="5" y="10" width="12" height="1" fill="#000"/><rect x="1" y="11" width="1" height="1" fill="#000"/><rect x="6" y="11" width="1" height="1" fill="#000"/><rect x="7" y="11" width="2" height="1" fill="#909090"/><rect x="10" y="11" width="6" height="1" fill="#000"/><rect x="11" y="12" width="2" height="1" fill="#000"/><rect x="9" y="13" width="2" height="1" fill="#000"/><rect x="8" y="14" width="1" height="1" fill="#000"/></svg>
<div class="a" style="left:123px;top:303px;width:75px;height:15px;overflow:hidden"><div class="tr" style="left:0;top:0">Graphic Location</div></div>
<svg style="left:82px;top:318px" width="23" height="12" shape-rendering="crispEdges"><rect x="19" y="0" width="1" height="1" fill="#000"/><rect x="22" y="0" width="1" height="1" fill="#000"/><rect x="20" y="1" width="2" height="1" fill="#000"/><rect x="20" y="2" width="2" height="1" fill="#000"/><rect x="19" y="3" width="1" height="1" fill="#000"/><rect x="22" y="3" width="1" height="1" fill="#000"/><rect x="7" y="6" width="12" height="1" fill="#808080"/><rect x="7" y="7" width="1" height="1" fill="#808080"/><rect x="8" y="7" width="3" height="1" fill="#fff"/><rect x="11" y="7" width="1" height="1" fill="#808080"/><rect x="12" y="7" width="6" height="1" fill="#fff"/><rect x="18" y="7" width="1" height="1" fill="#808080"/><rect x="19" y="7" width="1" height="1" fill="#d8d8d8"/><rect x="2" y="8" width="1" height="1" fill="#808080"/><rect x="4" y="8" width="1" height="1" fill="#808080"/><rect x="6" y="8" width="2" height="1" fill="#808080"/><rect x="8" y="8" width="1" height="1" fill="#fff"/><rect x="9" y="8" width="1" height="1" fill="#808080"/><rect x="10" y="8" width="1" height="1" fill="#fff"/><rect x="11" y="8" width="1" height="1" fill="#808080"/><rect x="12" y="8" width="1" height="1" fill="#fff"/><rect x="13" y="8" width="5" height="1" fill="#808080"/><rect x="18" y="8" width="1" height="1" fill="#fff"/><rect x="19" y="8" width="1" height="1" fill="#808080"/><rect x="20" y="8" width="1" height="1" fill="#d8d8d8"/><rect x="7" y="9" width="1" height="1" fill="#808080"/><rect x="8" y="9" width="3" height="1" fill="#fff"/><rect x="11" y="9" width="1" height="1" fill="#808080"/><rect x="12" y="9" width="6" height="1" fill="#fff"/><rect x="18" y="9" width="1" height="1" fill="#808080"/><rect x="19" y="9" width="1" height="1" fill="#d8d8d8"/><rect x="7" y="10" width="12" height="1" fill="#808080"/><rect x="19" y="10" width="1" height="1" fill="#d8d8d8"/><rect x="8" y="11" width="12" height="1" fill="#d8d8d8"/></svg>
<div class="a" style="left:110px;top:319px;width:88px;height:15px;overflow:hidden"><div class="tr" style="left:0;top:0">Multimedia1: emultimedia</div></div>
<svg style="left:49px;top:338px;shape-rendering:crispEdges" width="9" height="9" viewBox="0 0 9 9"><rect x="0.5" y="0.5" width="8" height="8" rx="1" fill="#f4f4f4" stroke="#919191"/><path d="M2 4.5H7" stroke="#3c5a9c" stroke-width="1"/><path d="M4.5 2V7" stroke="#3c5a9c" stroke-width="1"/></svg>
<svg style="left:64px;top:335px;" width="16" height="14" viewBox="0 0 16 14"><path d="M4.5 0.5H13L15.5 3V13.5H4.5Z" fill="#fff" stroke="#7a7aba"/><path d="M5 1H12V13H5Z" fill="#d8e4f8"/><rect x="0.5" y="5.5" width="11" height="5" fill="#a8c8f0" stroke="#3050c0" stroke-width="1.2"/><path d="M2 7.5H10" stroke="#e0f0ff"/></svg>
<div class="tr" style="left:85px;top:335px;">Details b</div>
<svg style="left:49px;top:354px;shape-rendering:crispEdges" width="9" height="9" viewBox="0 0 9 9"><rect x="0.5" y="0.5" width="8" height="8" rx="1" fill="#f4f4f4" stroke="#919191"/><path d="M2 4.5H7" stroke="#3c5a9c" stroke-width="1"/><path d="M4.5 2V7" stroke="#3c5a9c" stroke-width="1"/></svg>
<svg style="left:68px;top:351px;" width="12" height="14" viewBox="0 0 12 14"><path d="M0.5 1.5H9.5V13.5H0.5Z" fill="#fff" stroke="#909090"/><path d="M2 5.5H4M6 5.5H8M2 8.5H8M2 10.5H8M2 12.5H8" stroke="#a0a0a0"/><rect x="4.5" y="3" width="1" height="3" fill="#b0b0b0"/><path d="M8 0L11 3M11 0L8 3" stroke="#000" stroke-width="1.1"/></svg>
<div class="tr" style="left:85px;top:351px;">Details c</div>
<svg style="left:49px;top:370px;shape-rendering:crispEdges" width="9" height="9" viewBox="0 0 9 9"><rect x="0.5" y="0.5" width="8" height="8" rx="1" fill="#f4f4f4" stroke="#919191"/><path d="M2 4.5H7" stroke="#3c5a9c" stroke-width="1"/><path d="M4.5 2V7" stroke="#3c5a9c" stroke-width="1"/></svg>
<svg style="left:68px;top:367px;" width="12" height="14" viewBox="0 0 12 14"><path d="M0.5 1.5H9.5V13.5H0.5Z" fill="#fff" stroke="#909090"/><path d="M2 5.5H4M6 5.5H8M2 8.5H8M2 10.5H8M2 12.5H8" stroke="#a0a0a0"/><rect x="4.5" y="3" width="1" height="3" fill="#b0b0b0"/><path d="M8 0L11 3M11 0L8 3" stroke="#000" stroke-width="1.1"/></svg>
<div class="tr" style="left:85px;top:367px;">Details d</div>
<svg style="left:64px;top:383px;" width="16" height="14" viewBox="0 0 16 14"><path d="M4.5 0.5H13L15.5 3V13.5H4.5Z" fill="#fff" stroke="#7a7aba"/><path d="M5 1H12V13H5Z" fill="#d8e4f8"/><rect x="0.5" y="5.5" width="11" height="5" fill="#a8c8f0" stroke="#3050c0" stroke-width="1.2"/><path d="M2 7.5H10" stroke="#e0f0ff"/></svg>
<div class="tr" style="left:85px;top:383px;">Details e</div>
<svg style="left:49px;top:399px;" width="12" height="14" viewBox="0 0 12 14"><path d="M0.5 1.5H9.5V13.5H0.5Z" fill="#fff" stroke="#909090"/><path d="M2 5.5H4M6 5.5H8M2 8.5H8M2 10.5H8M2 12.5H8" stroke="#a0a0a0"/><rect x="4.5" y="3" width="1" height="3" fill="#b0b0b0"/><path d="M8 0L11 3M11 0L8 3" stroke="#000" stroke-width="1.1"/></svg>
<div class="tr" style="left:66px;top:399px;">Report Footer</div>
<svg style="left:30px;top:418px;shape-rendering:crispEdges" width="9" height="9" viewBox="0 0 9 9"><rect x="0.5" y="0.5" width="8" height="8" rx="1" fill="#f4f4f4" stroke="#919191"/><path d="M2 4.5H7" stroke="#3c5a9c" stroke-width="1"/><path d="M4.5 2V7" stroke="#3c5a9c" stroke-width="1"/></svg>
<svg style="left:45px;top:415px;" width="16" height="14" viewBox="0 0 16 14"><path d="M4.5 0.5H13L15.5 3V13.5H4.5Z" fill="#fff" stroke="#7a7aba"/><path d="M5 1H12V13H5Z" fill="#d8e4f8"/><rect x="0.5" y="5.5" width="11" height="5" fill="#a8c8f0" stroke="#3050c0" stroke-width="1.2"/><path d="M2 7.5H10" stroke="#e0f0ff"/></svg>
<div class="tr" style="left:66px;top:415px;">Page Footer</div>
<svg style="left:234px;top:104px;shape-rendering:crispEdges" width="9" height="9" viewBox="0 0 9 9"><rect x="0.5" y="0.5" width="8" height="8" rx="1" fill="#f4f4f4" stroke="#919191"/><path d="M2 4.5H7" stroke="#3c5a9c" stroke-width="1"/><path d="M4.5 2V7" stroke="#3c5a9c" stroke-width="1"/></svg>
<svg style="left:250px;top:100px;" width="15" height="16" viewBox="0 0 15 16"><path d="M2.5 0.5H10L11.5 2V9.5H2.5Z" fill="#fff" stroke="#4a78d8"/><path d="M4 4Q5 2 7 3Q9 2 10 4Q8 6 7 5Q5 6 4 4Z" fill="#e02020"/><circle cx="8" cy="4" r="1.3" fill="#10a010"/><circle cx="7" cy="5" r="1.2" fill="#0000c0"/><rect x="0.5" y="9.5" width="13" height="5" fill="#fff" stroke="#4a78d8"/><path d="M3 12H4M6 12H11.5" stroke="#4a78d8"/><path d="M14 10V15H1" stroke="#c8c8c8" fill="none"/></svg>
<div class="tr" style="left:270px;top:101px;">Report Fields</div>
<svg style="left:234px;top:120px;shape-rendering:crispEdges" width="9" height="9" viewBox="0 0 9 9"><rect x="0.5" y="0.5" width="8" height="8" rx="1" fill="#f4f4f4" stroke="#919191"/><path d="M2 4.5H7" stroke="#3c5a9c" stroke-width="1"/><path d="M4.5 2V7" stroke="#3c5a9c" stroke-width="1"/></svg>
<svg style="left:252px;top:118px;" width="10" height="13" viewBox="0 0 10 13"><defs><linearGradient id="gold" x1="0" x2="1"><stop offset="0" stop-color="#c89a10"/><stop offset="0.35" stop-color="#fff070"/><stop offset="1" stop-color="#c09000"/></linearGradient></defs><path d="M0.5 2Q0.5 0.5 5 0.5Q9.5 0.5 9.5 2V11Q9.5 12.5 5 12.5Q0.5 12.5 0.5 11Z" fill="url(#gold)" stroke="#a88000" stroke-width="0.8"/><path d="M0.5 3Q5 4.5 9.5 3" stroke="#a88000" fill="none" stroke-width="0.8"/></svg>
<div class="tr" style="left:270px;top:117px;">EMu Multimedia x64 (ODBC (RDO))</div>
<svg width="0" height="0" style="position:absolute"><defs><pattern id="chk" width="2" height="2" patternUnits="userSpaceOnUse"><rect width="2" height="2" fill="#fff"/><rect width="1" height="1" fill="#ffff00"/><rect x="1" y="1" width="1" height="1" fill="#ffff00"/></pattern></defs></svg>
<svg style="left:507px;top:104px;shape-rendering:crispEdges" width="9" height="9" viewBox="0 0 9 9"><rect x="0.5" y="0.5" width="8" height="8" rx="1" fill="#f4f4f4" stroke="#919191"/><path d="M2 4.5H7" stroke="#3c5a9c" stroke-width="1"/></svg>
<svg style="left:521px;top:100px;" width="17" height="17" viewBox="0 0 17 17"><path d="M0.5 12.5V1.5L1.5 0.5H6.5L7.5 2.5H14.5V12.5Z" fill="url(#chk)" stroke="#888"/><g transform="translate(10.50,10.50)" fill="#000"><circle r="4.84"/><rect x="-1.35" y="-6.72" width="2.7" height="13.44" transform="rotate(22.5)"/><rect x="-1.35" y="-6.72" width="2.7" height="13.44" transform="rotate(67.5)"/><rect x="-1.35" y="-6.72" width="2.7" height="13.44" transform="rotate(112.5)"/><rect x="-1.35" y="-6.72" width="2.7" height="13.44" transform="rotate(157.5)"/></g><g transform="translate(9.50,9.50)" fill="#808000"><circle r="4.84"/><rect x="-1.35" y="-6.72" width="2.7" height="13.44" transform="rotate(22.5)"/><rect x="-1.35" y="-6.72" width="2.7" height="13.44" transform="rotate(67.5)"/><rect x="-1.35" y="-6.72" width="2.7" height="13.44" transform="rotate(112.5)"/><rect x="-1.35" y="-6.72" width="2.7" height="13.44" transform="rotate(157.5)"/></g><circle cx="9.80" cy="9.80" r="2.22" fill="#000"/><circle cx="10.10" cy="9.50" r="0.94" fill="#ffff60"/></svg>
<div class="tr" style="left:540px;top:101px;">Functions</div>
<svg style="left:526px;top:120px;shape-rendering:crispEdges" width="9" height="9" viewBox="0 0 9 9"><rect x="0.5" y="0.5" width="8" height="8" rx="1" fill="#f4f4f4" stroke="#919191"/><path d="M2 4.5H7" stroke="#3c5a9c" stroke-width="1"/></svg>
<svg style="left:540px;top:116px;" width="17" height="17" viewBox="0 0 17 17"><path d="M0.5 12.5V1.5L1.5 0.5H6.5L7.5 2.5H14.5V12.5Z" fill="url(#chk)" stroke="#888"/><g transform="translate(10.50,10.50)" fill="#000"><circle r="4.84"/><rect x="-1.35" y="-6.72" width="2.7" height="13.44" transform="rotate(22.5)"/><rect x="-1.35" y="-6.72" width="2.7" height="13.44" transform="rotate(67.5)"/><rect x="-1.35" y="-6.72" width="2.7" height="13.44" transform="rotate(112.5)"/><rect x="-1.35" y="-6.72" width="2.7" height="13.44" transform="rotate(157.5)"/></g><g transform="translate(9.50,9.50)" fill="#808000"><circle r="4.84"/><rect x="-1.35" y="-6.72" width="2.7" height="13.44" transform="rotate(22.5)"/><rect x="-1.35" y="-6.72" width="2.7" height="13.44" transform="rotate(67.5)"/><rect x="-1.35" y="-6.72" width="2.7" height="13.44" transform="rotate(112.5)"/><rect x="-1.35" y="-6.72" width="2.7" height="13.44" transform="rotate(157.5)"/></g><circle cx="9.80" cy="9.80" r="2.22" fill="#000"/><circle cx="10.10" cy="9.50" r="0.94" fill="#ffff60"/></svg>
<div class="tr" style="left:558px;top:117px;">Additional Functions</div>
<svg style="left:545px;top:136px;shape-rendering:crispEdges" width="9" height="9" viewBox="0 0 9 9"><rect x="0.5" y="0.5" width="8" height="8" rx="1" fill="#f4f4f4" stroke="#919191"/><path d="M2 4.5H7" stroke="#3c5a9c" stroke-width="1"/><path d="M4.5 2V7" stroke="#3c5a9c" stroke-width="1"/></svg>
<svg style="left:559px;top:132px;" width="17" height="17" viewBox="0 0 17 17"><path d="M0.5 12.5V1.5L1.5 0.5H6.5L7.5 2.5H14.5V12.5Z" fill="url(#chk)" stroke="#888"/><g transform="translate(10.50,10.50)" fill="#000"><circle r="4.84"/><rect x="-1.35" y="-6.72" width="2.7" height="13.44" transform="rotate(22.5)"/><rect x="-1.35" y="-6.72" width="2.7" height="13.44" transform="rotate(67.5)"/><rect x="-1.35" y="-6.72" width="2.7" height="13.44" transform="rotate(112.5)"/><rect x="-1.35" y="-6.72" width="2.7" height="13.44" transform="rotate(157.5)"/></g><g transform="translate(9.50,9.50)" fill="#808000"><circle r="4.84"/><rect x="-1.35" y="-6.72" width="2.7" height="13.44" transform="rotate(22.5)"/><rect x="-1.35" y="-6.72" width="2.7" height="13.44" transform="rotate(67.5)"/><rect x="-1.35" y="-6.72" width="2.7" height="13.44" transform="rotate(112.5)"/><rect x="-1.35" y="-6.72" width="2.7" height="13.44" transform="rotate(157.5)"/></g><circle cx="9.80" cy="9.80" r="2.22" fill="#000"/><circle cx="10.10" cy="9.50" r="0.94" fill="#ffff60"/></svg>
<div class="a" style="left:577px;top:133px;width:152px;height:14px;overflow:hidden"><div class="tr" style="left:0;top:0">2000 (u2l2000.dll)</div></div>
<svg style="left:545px;top:152px;shape-rendering:crispEdges" width="9" height="9" viewBox="0 0 9 9"><rect x="0.5" y="0.5" width="8" height="8" rx="1" fill="#f4f4f4" stroke="#919191"/><path d="M2 4.5H7" stroke="#3c5a9c" stroke-width="1"/><path d="M4.5 2V7" stroke="#3c5a9c" stroke-width="1"/></svg>
<svg style="left:559px;top:148px;" width="17" height="17" viewBox="0 0 17 17"><path d="M0.5 12.5V1.5L1.5 0.5H6.5L7.5 2.5H14.5V12.5Z" fill="url(#chk)" stroke="#888"/><g transform="translate(10.50,10.50)" fill="#000"><circle r="4.84"/><rect x="-1.35" y="-6.72" width="2.7" height="13.44" transform="rotate(22.5)"/><rect x="-1.35" y="-6.72" width="2.7" height="13.44" transform="rotate(67.5)"/><rect x="-1.35" y="-6.72" width="2.7" height="13.44" transform="rotate(112.5)"/><rect x="-1.35" y="-6.72" width="2.7" height="13.44" transform="rotate(157.5)"/></g><g transform="translate(9.50,9.50)" fill="#808000"><circle r="4.84"/><rect x="-1.35" y="-6.72" width="2.7" height="13.44" transform="rotate(22.5)"/><rect x="-1.35" y="-6.72" width="2.7" height="13.44" transform="rotate(67.5)"/><rect x="-1.35" y="-6.72" width="2.7" height="13.44" transform="rotate(112.5)"/><rect x="-1.35" y="-6.72" width="2.7" height="13.44" transform="rotate(157.5)"/></g><circle cx="9.80" cy="9.80" r="2.22" fill="#000"/><circle cx="10.10" cy="9.50" r="0.94" fill="#ffff60"/></svg>
<div class="a" style="left:577px;top:149px;width:152px;height:14px;overflow:hidden"><div class="tr" style="left:0;top:0">22000 (u2122000.dll)</div></div>
<svg style="left:545px;top:168px;shape-rendering:crispEdges" width="9" height="9" viewBox="0 0 9 9"><rect x="0.5" y="0.5" width="8" height="8" rx="1" fill="#f4f4f4" stroke="#919191"/><path d="M2 4.5H7" stroke="#3c5a9c" stroke-width="1"/><path d="M4.5 2V7" stroke="#3c5a9c" stroke-width="1"/></svg>
<svg style="left:559px;top:164px;" width="17" height="17" viewBox="0 0 17 17"><path d="M0.5 12.5V1.5L1.5 0.5H6.5L7.5 2.5H14.5V12.5Z" fill="url(#chk)" stroke="#888"/><g transform="translate(10.50,10.50)" fill="#000"><circle r="4.84"/><rect x="-1.35" y="-6.72" width="2.7" height="13.44" transform="rotate(22.5)"/><rect x="-1.35" y="-6.72" width="2.7" height="13.44" transform="rotate(67.5)"/><rect x="-1.35" y="-6.72" width="2.7" height="13.44" transform="rotate(112.5)"/><rect x="-1.35" y="-6.72" width="2.7" height="13.44" transform="rotate(157.5)"/></g><g transform="translate(9.50,9.50)" fill="#808000"><circle r="4.84"/><rect x="-1.35" y="-6.72" width="2.7" height="13.44" transform="rotate(22.5)"/><rect x="-1.35" y="-6.72" width="2.7" height="13.44" transform="rotate(67.5)"/><rect x="-1.35" y="-6.72" width="2.7" height="13.44" transform="rotate(112.5)"/><rect x="-1.35" y="-6.72" width="2.7" height="13.44" transform="rotate(157.5)"/></g><circle cx="9.80" cy="9.80" r="2.22" fill="#000"/><circle cx="10.10" cy="9.50" r="0.94" fill="#ffff60"/></svg>
<div class="a" style="left:577px;top:165px;width:152px;height:14px;overflow:hidden"><div class="tr" style="left:0;top:0">2dts (u212dts.dll)</div></div>
<svg style="left:545px;top:184px;shape-rendering:crispEdges" width="9" height="9" viewBox="0 0 9 9"><rect x="0.5" y="0.5" width="8" height="8" rx="1" fill="#f4f4f4" stroke="#919191"/><path d="M2 4.5H7" stroke="#3c5a9c" stroke-width="1"/><path d="M4.5 2V7" stroke="#3c5a9c" stroke-width="1"/></svg>
<svg style="left:559px;top:180px;" width="17" height="17" viewBox="0 0 17 17"><path d="M0.5 12.5V1.5L1.5 0.5H6.5L7.5 2.5H14.5V12.5Z" fill="url(#chk)" stroke="#888"/><g transform="translate(10.50,10.50)" fill="#000"><circle r="4.84"/><rect x="-1.35" y="-6.72" width="2.7" height="13.44" transform="rotate(22.5)"/><rect x="-1.35" y="-6.72" width="2.7" height="13.44" transform="rotate(67.5)"/><rect x="-1.35" y="-6.72" width="2.7" height="13.44" transform="rotate(112.5)"/><rect x="-1.35" y="-6.72" width="2.7" height="13.44" transform="rotate(157.5)"/></g><g transform="translate(9.50,9.50)" fill="#808000"><circle r="4.84"/><rect x="-1.35" y="-6.72" width="2.7" height="13.44" transform="rotate(22.5)"/><rect x="-1.35" y="-6.72" width="2.7" height="13.44" transform="rotate(67.5)"/><rect x="-1.35" y="-6.72" width="2.7" height="13.44" transform="rotate(112.5)"/><rect x="-1.35" y="-6.72" width="2.7" height="13.44" transform="rotate(157.5)"/></g><circle cx="9.80" cy="9.80" r="2.22" fill="#000"/><circle cx="10.10" cy="9.50" r="0.94" fill="#ffff60"/></svg>
<div class="a" style="left:577px;top:181px;width:152px;height:14px;overflow:hidden"><div class="tr" style="left:0;top:0">2exch (u212exch.dll)</div></div>
<svg style="left:545px;top:200px;shape-rendering:crispEdges" width="9" height="9" viewBox="0 0 9 9"><rect x="0.5" y="0.5" width="8" height="8" rx="1" fill="#f4f4f4" stroke="#919191"/><path d="M2 4.5H7" stroke="#3c5a9c" stroke-width="1"/><path d="M4.5 2V7" stroke="#3c5a9c" stroke-width="1"/></svg>
<svg style="left:559px;top:196px;" width="17" height="17" viewBox="0 0 17 17"><path d="M0.5 12.5V1.5L1.5 0.5H6.5L7.5 2.5H14.5V12.5Z" fill="url(#chk)" stroke="#888"/><g transform="translate(10.50,10.50)" fill="#000"><circle r="4.84"/><rect x="-1.35" y="-6.72" width="2.7" height="13.44" transform="rotate(22.5)"/><rect x="-1.35" y="-6.72" width="2.7" height="13.44" transform="rotate(67.5)"/><rect x="-1.35" y="-6.72" width="2.7" height="13.44" transform="rotate(112.5)"/><rect x="-1.35" y="-6.72" width="2.7" height="13.44" transform="rotate(157.5)"/></g><g transform="translate(9.50,9.50)" fill="#808000"><circle r="4.84"/><rect x="-1.35" y="-6.72" width="2.7" height="13.44" transform="rotate(22.5)"/><rect x="-1.35" y="-6.72" width="2.7" height="13.44" transform="rotate(67.5)"/><rect x="-1.35" y="-6.72" width="2.7" height="13.44" transform="rotate(112.5)"/><rect x="-1.35" y="-6.72" width="2.7" height="13.44" transform="rotate(157.5)"/></g><circle cx="9.80" cy="9.80" r="2.22" fill="#000"/><circle cx="10.10" cy="9.50" r="0.94" fill="#ffff60"/></svg>
<div class="a" style="left:577px;top:197px;width:152px;height:14px;overflow:hidden"><div class="tr" style="left:0;top:0">2finra (u212finra.dll)</div></div>
<svg style="left:545px;top:216px;shape-rendering:crispEdges" width="9" height="9" viewBox="0 0 9 9"><rect x="0.5" y="0.5" width="8" height="8" rx="1" fill="#f4f4f4" stroke="#919191"/><path d="M2 4.5H7" stroke="#3c5a9c" stroke-width="1"/><path d="M4.5 2V7" stroke="#3c5a9c" stroke-width="1"/></svg>
<svg style="left:559px;top:212px;" width="17" height="17" viewBox="0 0 17 17"><path d="M0.5 12.5V1.5L1.5 0.5H6.5L7.5 2.5H14.5V12.5Z" fill="url(#chk)" stroke="#888"/><g transform="translate(10.50,10.50)" fill="#000"><circle r="4.84"/><rect x="-1.35" y="-6.72" width="2.7" height="13.44" transform="rotate(22.5)"/><rect x="-1.35" y="-6.72" width="2.7" height="13.44" transform="rotate(67.5)"/><rect x="-1.35" y="-6.72" width="2.7" height="13.44" transform="rotate(112.5)"/><rect x="-1.35" y="-6.72" width="2.7" height="13.44" transform="rotate(157.5)"/></g><g transform="translate(9.50,9.50)" fill="#808000"><circle r="4.84"/><rect x="-1.35" y="-6.72" width="2.7" height="13.44" transform="rotate(22.5)"/><rect x="-1.35" y="-6.72" width="2.7" height="13.44" transform="rotate(67.5)"/><rect x="-1.35" y="-6.72" width="2.7" height="13.44" transform="rotate(112.5)"/><rect x="-1.35" y="-6.72" width="2.7" height="13.44" transform="rotate(157.5)"/></g><circle cx="9.80" cy="9.80" r="2.22" fill="#000"/><circle cx="10.10" cy="9.50" r="0.94" fill="#ffff60"/></svg>
<div class="a" style="left:577px;top:213px;width:152px;height:14px;overflow:hidden"><div class="tr" style="left:0;top:0">2samp (u212samp.dll)</div></div>
<svg style="left:545px;top:232px;shape-rendering:crispEdges" width="9" height="9" viewBox="0 0 9 9"><rect x="0.5" y="0.5" width="8" height="8" rx="1" fill="#f4f4f4" stroke="#919191"/><path d="M2 4.5H7" stroke="#3c5a9c" stroke-width="1"/><path d="M4.5 2V7" stroke="#3c5a9c" stroke-width="1"/></svg>
<svg style="left:559px;top:228px;" width="17" height="17" viewBox="0 0 17 17"><path d="M0.5 12.5V1.5L1.5 0.5H6.5L7.5 2.5H14.5V12.5Z" fill="url(#chk)" stroke="#888"/><g transform="translate(10.50,10.50)" fill="#000"><circle r="4.84"/><rect x="-1.35" y="-6.72" width="2.7" height="13.44" transform="rotate(22.5)"/><rect x="-1.35" y="-6.72" width="2.7" height="13.44" transform="rotate(67.5)"/><rect x="-1.35" y="-6.72" width="2.7" height="13.44" transform="rotate(112.5)"/><rect x="-1.35" y="-6.72" width="2.7" height="13.44" transform="rotate(157.5)"/></g><g transform="translate(9.50,9.50)" fill="#808000"><circle r="4.84"/><rect x="-1.35" y="-6.72" width="2.7" height="13.44" transform="rotate(22.5)"/><rect x="-1.35" y="-6.72" width="2.7" height="13.44" transform="rotate(67.5)"/><rect x="-1.35" y="-6.72" width="2.7" height="13.44" transform="rotate(112.5)"/><rect x="-1.35" y="-6.72" width="2.7" height="13.44" transform="rotate(157.5)"/></g><circle cx="9.80" cy="9.80" r="2.22" fill="#000"/><circle cx="10.10" cy="9.50" r="0.94" fill="#ffff60"/></svg>
<div class="a" style="left:577px;top:229px;width:152px;height:14px;overflow:hidden"><div class="tr" style="left:0;top:0">azalea (u25azalea.dll)</div></div>
<svg style="left:545px;top:248px;shape-rendering:crispEdges" width="9" height="9" viewBox="0 0 9 9"><rect x="0.5" y="0.5" width="8" height="8" rx="1" fill="#f4f4f4" stroke="#919191"/><path d="M2 4.5H7" stroke="#3c5a9c" stroke-width="1"/></svg>
<svg style="left:559px;top:244px;" width="17" height="17" viewBox="0 0 17 17"><path d="M0.5 12.5V1.5L1.5 0.5H6.5L7.5 2.5H14.5V12.5Z" fill="url(#chk)" stroke="#888"/><g transform="translate(10.50,10.50)" fill="#000"><circle r="4.84"/><rect x="-1.35" y="-6.72" width="2.7" height="13.44" transform="rotate(22.5)"/><rect x="-1.35" y="-6.72" width="2.7" height="13.44" transform="rotate(67.5)"/><rect x="-1.35" y="-6.72" width="2.7" height="13.44" transform="rotate(112.5)"/><rect x="-1.35" y="-6.72" width="2.7" height="13.44" transform="rotate(157.5)"/></g><g transform="translate(9.50,9.50)" fill="#808000"><circle r="4.84"/><rect x="-1.35" y="-6.72" width="2.7" height="13.44" transform="rotate(22.5)"/><rect x="-1.35" y="-6.72" width="2.7" height="13.44" transform="rotate(67.5)"/><rect x="-1.35" y="-6.72" width="2.7" height="13.44" transform="rotate(112.5)"/><rect x="-1.35" y="-6.72" width="2.7" height="13.44" transform="rotate(157.5)"/></g><circle cx="9.80" cy="9.80" r="2.22" fill="#000"/><circle cx="10.10" cy="9.50" r="0.94" fill="#ffff60"/></svg>
<div class="a" style="left:577px;top:245px;width:152px;height:14px;overflow:hidden"><div class="tr" style="left:0;top:0">COM and .NET UFLs (u212com.dll)</div></div>
<div class="a" style="left:578px;top:292px;width:151px;height:16px;background:#f0f0f0;"></div>
<div class="a" style="left:580px;top:261px;width:149px;height:14px;overflow:hidden"><div class="tr" style="left:0;top:0">DotNetSampleClassTestStringLength</div></div>
<div class="a" style="left:580px;top:277px;width:149px;height:14px;overflow:hidden"><div class="tr" style="left:0;top:0">DotNetSampleClassTestTranslate</div></div>
<div class="a" style="left:580px;top:293px;width:149px;height:14px;overflow:hidden"><div class="tr" style="left:0;top:0">ResizeImageUFLClassResizeImage</div></div>
<svg style="left:545px;top:312px;shape-rendering:crispEdges" width="9" height="9" viewBox="0 0 9 9"><rect x="0.5" y="0.5" width="8" height="8" rx="1" fill="#f4f4f4" stroke="#919191"/><path d="M2 4.5H7" stroke="#3c5a9c" stroke-width="1"/><path d="M4.5 2V7" stroke="#3c5a9c" stroke-width="1"/></svg>
<svg style="left:559px;top:308px;" width="17" height="17" viewBox="0 0 17 17"><path d="M0.5 12.5V1.5L1.5 0.5H6.5L7.5 2.5H14.5V12.5Z" fill="url(#chk)" stroke="#888"/><g transform="translate(10.50,10.50)" fill="#000"><circle r="4.84"/><rect x="-1.35" y="-6.72" width="2.7" height="13.44" transform="rotate(22.5)"/><rect x="-1.35" y="-6.72" width="2.7" height="13.44" transform="rotate(67.5)"/><rect x="-1.35" y="-6.72" width="2.7" height="13.44" transform="rotate(112.5)"/><rect x="-1.35" y="-6.72" width="2.7" height="13.44" transform="rotate(157.5)"/></g><g transform="translate(9.50,9.50)" fill="#808000"><circle r="4.84"/><rect x="-1.35" y="-6.72" width="2.7" height="13.44" transform="rotate(22.5)"/><rect x="-1.35" y="-6.72" width="2.7" height="13.44" transform="rotate(67.5)"/><rect x="-1.35" y="-6.72" width="2.7" height="13.44" transform="rotate(112.5)"/><rect x="-1.35" y="-6.72" width="2.7" height="13.44" transform="rotate(157.5)"/></g><circle cx="9.80" cy="9.80" r="2.22" fill="#000"/><circle cx="10.10" cy="9.50" r="0.94" fill="#ffff60"/></svg>
<div class="tr" style="left:577px;top:309px;">dts (u25dts.dll)</div>
<svg style="left:545px;top:328px;shape-rendering:crispEdges" width="9" height="9" viewBox="0 0 9 9"><rect x="0.5" y="0.5" width="8" height="8" rx="1" fill="#f4f4f4" stroke="#919191"/><path d="M2 4.5H7" stroke="#3c5a9c" stroke-width="1"/><path d="M4.5 2V7" stroke="#3c5a9c" stroke-width="1"/></svg>
<svg style="left:559px;top:324px;" width="17" height="17" viewBox="0 0 17 17"><path d="M0.5 12.5V1.5L1.5 0.5H6.5L7.5 2.5H14.5V12.5Z" fill="url(#chk)" stroke="#888"/><g transform="translate(10.50,10.50)" fill="#000"><circle r="4.84"/><rect x="-1.35" y="-6.72" width="2.7" height="13.44" transform="rotate(22.5)"/><rect x="-1.35" y="-6.72" width="2.7" height="13.44" transform="rotate(67.5)"/><rect x="-1.35" y="-6.72" width="2.7" height="13.44" transform="rotate(112.5)"/><rect x="-1.35" y="-6.72" width="2.7" height="13.44" transform="rotate(157.5)"/></g><g transform="translate(9.50,9.50)" fill="#808000"><circle r="4.84"/><rect x="-1.35" y="-6.72" width="2.7" height="13.44" transform="rotate(22.5)"/><rect x="-1.35" y="-6.72" width="2.7" height="13.44" transform="rotate(67.5)"/><rect x="-1.35" y="-6.72" width="2.7" height="13.44" transform="rotate(112.5)"/><rect x="-1.35" y="-6.72" width="2.7" height="13.44" transform="rotate(157.5)"/></g><circle cx="9.80" cy="9.80" r="2.22" fill="#000"/><circle cx="10.10" cy="9.50" r="0.94" fill="#ffff60"/></svg>
<div class="tr" style="left:577px;top:325px;">dts (u2ldts.dll)</div>
<svg style="left:545px;top:344px;shape-rendering:crispEdges" width="9" height="9" viewBox="0 0 9 9"><rect x="0.5" y="0.5" width="8" height="8" rx="1" fill="#f4f4f4" stroke="#919191"/><path d="M2 4.5H7" stroke="#3c5a9c" stroke-width="1"/><path d="M4.5 2V7" stroke="#3c5a9c" stroke-width="1"/></svg>
<svg style="left:559px;top:340px;" width="17" height="17" viewBox="0 0 17 17"><path d="M0.5 12.5V1.5L1.5 0.5H6.5L7.5 2.5H14.5V12.5Z" fill="url(#chk)" stroke="#888"/><g transform="translate(10.50,10.50)" fill="#000"><circle r="4.84"/><rect x="-1.35" y="-6.72" width="2.7" height="13.44" transform="rotate(22.5)"/><rect x="-1.35" y="-6.72" width="2.7" height="13.44" transform="rotate(67.5)"/><rect x="-1.35" y="-6.72" width="2.7" height="13.44" transform="rotate(112.5)"/><rect x="-1.35" y="-6.72" width="2.7" height="13.44" transform="rotate(157.5)"/></g><g transform="translate(9.50,9.50)" fill="#808000"><circle r="4.84"/><rect x="-1.35" y="-6.72" width="2.7" height="13.44" transform="rotate(22.5)"/><rect x="-1.35" y="-6.72" width="2.7" height="13.44" transform="rotate(67.5)"/><rect x="-1.35" y="-6.72" width="2.7" height="13.44" transform="rotate(112.5)"/><rect x="-1.35" y="-6.72" width="2.7" height="13.44" transform="rotate(157.5)"/></g><circle cx="9.80" cy="9.80" r="2.22" fill="#000"/><circle cx="10.10" cy="9.50" r="0.94" fill="#ffff60"/></svg>
<div class="tr" style="left:577px;top:341px;">exch (u2lexch.dll)</div>
<svg style="left:545px;top:360px;shape-rendering:crispEdges" width="9" height="9" viewBox="0 0 9 9"><rect x="0.5" y="0.5" width="8" height="8" rx="1" fill="#f4f4f4" stroke="#919191"/><path d="M2 4.5H7" stroke="#3c5a9c" stroke-width="1"/><path d="M4.5 2V7" stroke="#3c5a9c" stroke-width="1"/></svg>
<svg style="left:559px;top:356px;" width="17" height="17" viewBox="0 0 17 17"><path d="M0.5 12.5V1.5L1.5 0.5H6.5L7.5 2.5H14.5V12.5Z" fill="url(#chk)" stroke="#888"/><g transform="translate(10.50,10.50)" fill="#000"><circle r="4.84"/><rect x="-1.35" y="-6.72" width="2.7" height="13.44" transform="rotate(22.5)"/><rect x="-1.35" y="-6.72" width="2.7" height="13.44" transform="rotate(67.5)"/><rect x="-1.35" y="-6.72" width="2.7" height="13.44" transform="rotate(112.5)"/><rect x="-1.35" y="-6.72" width="2.7" height="13.44" transform="rotate(157.5)"/></g><g transform="translate(9.50,9.50)" fill="#808000"><circle r="4.84"/><rect x="-1.35" y="-6.72" width="2.7" height="13.44" transform="rotate(22.5)"/><rect x="-1.35" y="-6.72" width="2.7" height="13.44" transform="rotate(67.5)"/><rect x="-1.35" y="-6.72" width="2.7" height="13.44" transform="rotate(112.5)"/><rect x="-1.35" y="-6.72" width="2.7" height="13.44" transform="rotate(157.5)"/></g><circle cx="9.80" cy="9.80" r="2.22" fill="#000"/><circle cx="10.10" cy="9.50" r="0.94" fill="#ffff60"/></svg>
<div class="tr" style="left:577px;top:357px;">samp1 (u25samp1.dll)</div>
<div class="a" style="left:499px;top:370px;width:230px;height:7px;overflow:hidden">
<svg style="left:41px;top:4px;" width="17" height="17" viewBox="0 0 17 17"><path d="M0.5 12.5V1.5L1.5 0.5H6.5L7.5 2.5H14.5V12.5Z" fill="url(#chk)" stroke="#888"/><g transform="translate(10.50,10.50)" fill="#000"><circle r="4.84"/><rect x="-1.35" y="-6.72" width="2.7" height="13.44" transform="rotate(22.5)"/><rect x="-1.35" y="-6.72" width="2.7" height="13.44" transform="rotate(67.5)"/><rect x="-1.35" y="-6.72" width="2.7" height="13.44" transform="rotate(112.5)"/><rect x="-1.35" y="-6.72" width="2.7" height="13.44" transform="rotate(157.5)"/></g><g transform="translate(9.50,9.50)" fill="#808000"><circle r="4.84"/><rect x="-1.35" y="-6.72" width="2.7" height="13.44" transform="rotate(22.5)"/><rect x="-1.35" y="-6.72" width="2.7" height="13.44" transform="rotate(67.5)"/><rect x="-1.35" y="-6.72" width="2.7" height="13.44" transform="rotate(112.5)"/><rect x="-1.35" y="-6.72" width="2.7" height="13.44" transform="rotate(157.5)"/></g><circle cx="9.80" cy="9.80" r="2.22" fill="#000"/><circle cx="10.10" cy="9.50" r="0.94" fill="#ffff60"/></svg>
</div>
<svg style="left:779px;top:104px;shape-rendering:crispEdges" width="9" height="9" viewBox="0 0 9 9"><rect x="0.5" y="0.5" width="8" height="8" rx="1" fill="#f4f4f4" stroke="#919191"/><path d="M2 4.5H7" stroke="#3c5a9c" stroke-width="1"/><path d="M4.5 2V7" stroke="#3c5a9c" stroke-width="1"/></svg>
<svg style="left:790px;top:98px" width="19" height="18" shape-rendering="crispEdges"><rect x="4" y="2" width="5" height="1" fill="#8a8a8a"/><rect x="3" y="3" width="1" height="1" fill="#8a8a8a"/><rect x="4" y="3" width="1" height="1" fill="#ffff00"/><rect x="5" y="3" width="1" height="1" fill="#fff"/><rect x="6" y="3" width="1" height="1" fill="#ffff00"/><rect x="7" y="3" width="1" height="1" fill="#fff"/><rect x="8" y="3" width="1" height="1" fill="#ffff00"/><rect x="9" y="3" width="1" height="1" fill="#8a8a8a"/><rect x="3" y="4" width="1" height="1" fill="#8a8a8a"/><rect x="4" y="4" width="1" height="1" fill="#fff"/><rect x="5" y="4" width="1" height="1" fill="#ffff00"/><rect x="6" y="4" width="1" height="1" fill="#fff"/><rect x="7" y="4" width="1" height="1" fill="#ffff00"/><rect x="8" y="4" width="1" height="1" fill="#fff"/><rect x="9" y="4" width="1" height="1" fill="#ffff00"/><rect x="10" y="4" width="6" height="1" fill="#8a8a8a"/><rect x="3" y="5" width="1" height="1" fill="#8a8a8a"/><rect x="4" y="5" width="1" height="1" fill="#ffff00"/><rect x="5" y="5" width="1" height="1" fill="#fff"/><rect x="6" y="5" width="1" height="1" fill="#ffff00"/><rect x="7" y="5" width="1" height="1" fill="#fff"/><rect x="8" y="5" width="1" height="1" fill="#ffff00"/><rect x="9" y="5" width="1" height="1" fill="#fff"/><rect x="10" y="5" width="1" height="1" fill="#ffff00"/><rect x="11" y="5" width="1" height="1" fill="#fff"/><rect x="12" y="5" width="1" height="1" fill="#ffff00"/><rect x="13" y="5" width="1" height="1" fill="#fff"/><rect x="14" y="5" width="1" height="1" fill="#ffff00"/><rect x="15" y="5" width="1" height="1" fill="#8a8a8a"/><rect x="3" y="6" width="1" height="1" fill="#8a8a8a"/><rect x="4" y="6" width="1" height="1" fill="#fff"/><rect x="5" y="6" width="1" height="1" fill="#ffff00"/><rect x="6" y="6" width="1" height="1" fill="#fff"/><rect x="7" y="6" width="1" height="1" fill="#ffff00"/><rect x="8" y="6" width="1" height="1" fill="#fff"/><rect x="9" y="6" width="2" height="1" fill="#0000ff"/><rect x="11" y="6" width="1" height="1" fill="#000"/><rect x="12" y="6" width="1" height="1" fill="#ffff00"/><rect x="13" y="6" width="3" height="1" fill="#0000ff"/><rect x="16" y="6" width="1" height="1" fill="#000"/><rect x="3" y="7" width="1" height="1" fill="#8a8a8a"/><rect x="4" y="7" width="1" height="1" fill="#ffff00"/><rect x="5" y="7" width="1" height="1" fill="#fff"/><rect x="6" y="7" width="1" height="1" fill="#ffff00"/><rect x="7" y="7" width="1" height="1" fill="#fff"/><rect x="8" y="7" width="1" height="1" fill="#ffff00"/><rect x="9" y="7" width="3" height="1" fill="#0000ff"/><rect x="12" y="7" width="1" height="1" fill="#000"/><rect x="13" y="7" width="3" height="1" fill="#0000ff"/><rect x="16" y="7" width="1" height="1" fill="#000"/><rect x="3" y="8" width="1" height="1" fill="#8a8a8a"/><rect x="4" y="8" width="1" height="1" fill="#fff"/><rect x="5" y="8" width="1" height="1" fill="#ffff00"/><rect x="6" y="8" width="1" height="1" fill="#fff"/><rect x="7" y="8" width="8" height="1" fill="#0000ff"/><rect x="15" y="8" width="1" height="1" fill="#000"/><rect x="3" y="9" width="1" height="1" fill="#8a8a8a"/><rect x="4" y="9" width="1" height="1" fill="#ffff00"/><rect x="5" y="9" width="1" height="1" fill="#fff"/><rect x="6" y="9" width="1" height="1" fill="#ffff00"/><rect x="7" y="9" width="8" height="1" fill="#0000ff"/><rect x="15" y="9" width="1" height="1" fill="#000"/><rect x="3" y="10" width="1" height="1" fill="#8a8a8a"/><rect x="4" y="10" width="1" height="1" fill="#fff"/><rect x="5" y="10" width="1" height="1" fill="#ffff00"/><rect x="6" y="10" width="1" height="1" fill="#fff"/><rect x="7" y="10" width="11" height="1" fill="#0000ff"/><rect x="18" y="10" width="1" height="1" fill="#000"/><rect x="3" y="11" width="1" height="1" fill="#8a8a8a"/><rect x="4" y="11" width="1" height="1" fill="#ffff00"/><rect x="5" y="11" width="1" height="1" fill="#fff"/><rect x="6" y="11" width="1" height="1" fill="#ffff00"/><rect x="7" y="11" width="11" height="1" fill="#0000ff"/><rect x="18" y="11" width="1" height="1" fill="#000"/><rect x="3" y="12" width="5" height="1" fill="#8a8a8a"/><rect x="8" y="12" width="10" height="1" fill="#0000ff"/><rect x="18" y="12" width="1" height="1" fill="#000"/><rect x="7" y="13" width="2" height="1" fill="#000"/><rect x="9" y="13" width="6" height="1" fill="#0000ff"/><rect x="15" y="13" width="4" height="1" fill="#000"/><rect x="9" y="14" width="3" height="1" fill="#0000ff"/><rect x="12" y="14" width="1" height="1" fill="#000"/><rect x="13" y="14" width="3" height="1" fill="#0000ff"/><rect x="16" y="14" width="1" height="1" fill="#000"/><rect x="9" y="15" width="3" height="1" fill="#0000ff"/><rect x="12" y="15" width="1" height="1" fill="#000"/><rect x="13" y="15" width="3" height="1" fill="#0000ff"/><rect x="16" y="15" width="1" height="1" fill="#000"/><rect x="9" y="16" width="2" height="1" fill="#0000ff"/><rect x="11" y="16" width="1" height="1" fill="#000"/><rect x="14" y="16" width="2" height="1" fill="#0000ff"/><rect x="16" y="16" width="1" height="1" fill="#000"/><rect x="9" y="17" width="3" height="1" fill="#000"/><rect x="14" y="17" width="3" height="1" fill="#000"/></svg>
<div class="tr" style="left:810px;top:101px;">Operators</div>
<div class="a" style="left:222px;top:394px;width:348px;height:37px;background:#fff350;mix-blend-mode:multiply"></div>
<div class="t" style="left:229px;top:401px;font-family:'Liberation Mono',monospace;font-size:13.33px;line-height:15px;color:#000050">ResizeImageUFLClassResizeImage (, , , )</div>
<div class="a" style="left:485px;top:400px;width:2px;height:15px;background:#000;"></div>
</body></html>
